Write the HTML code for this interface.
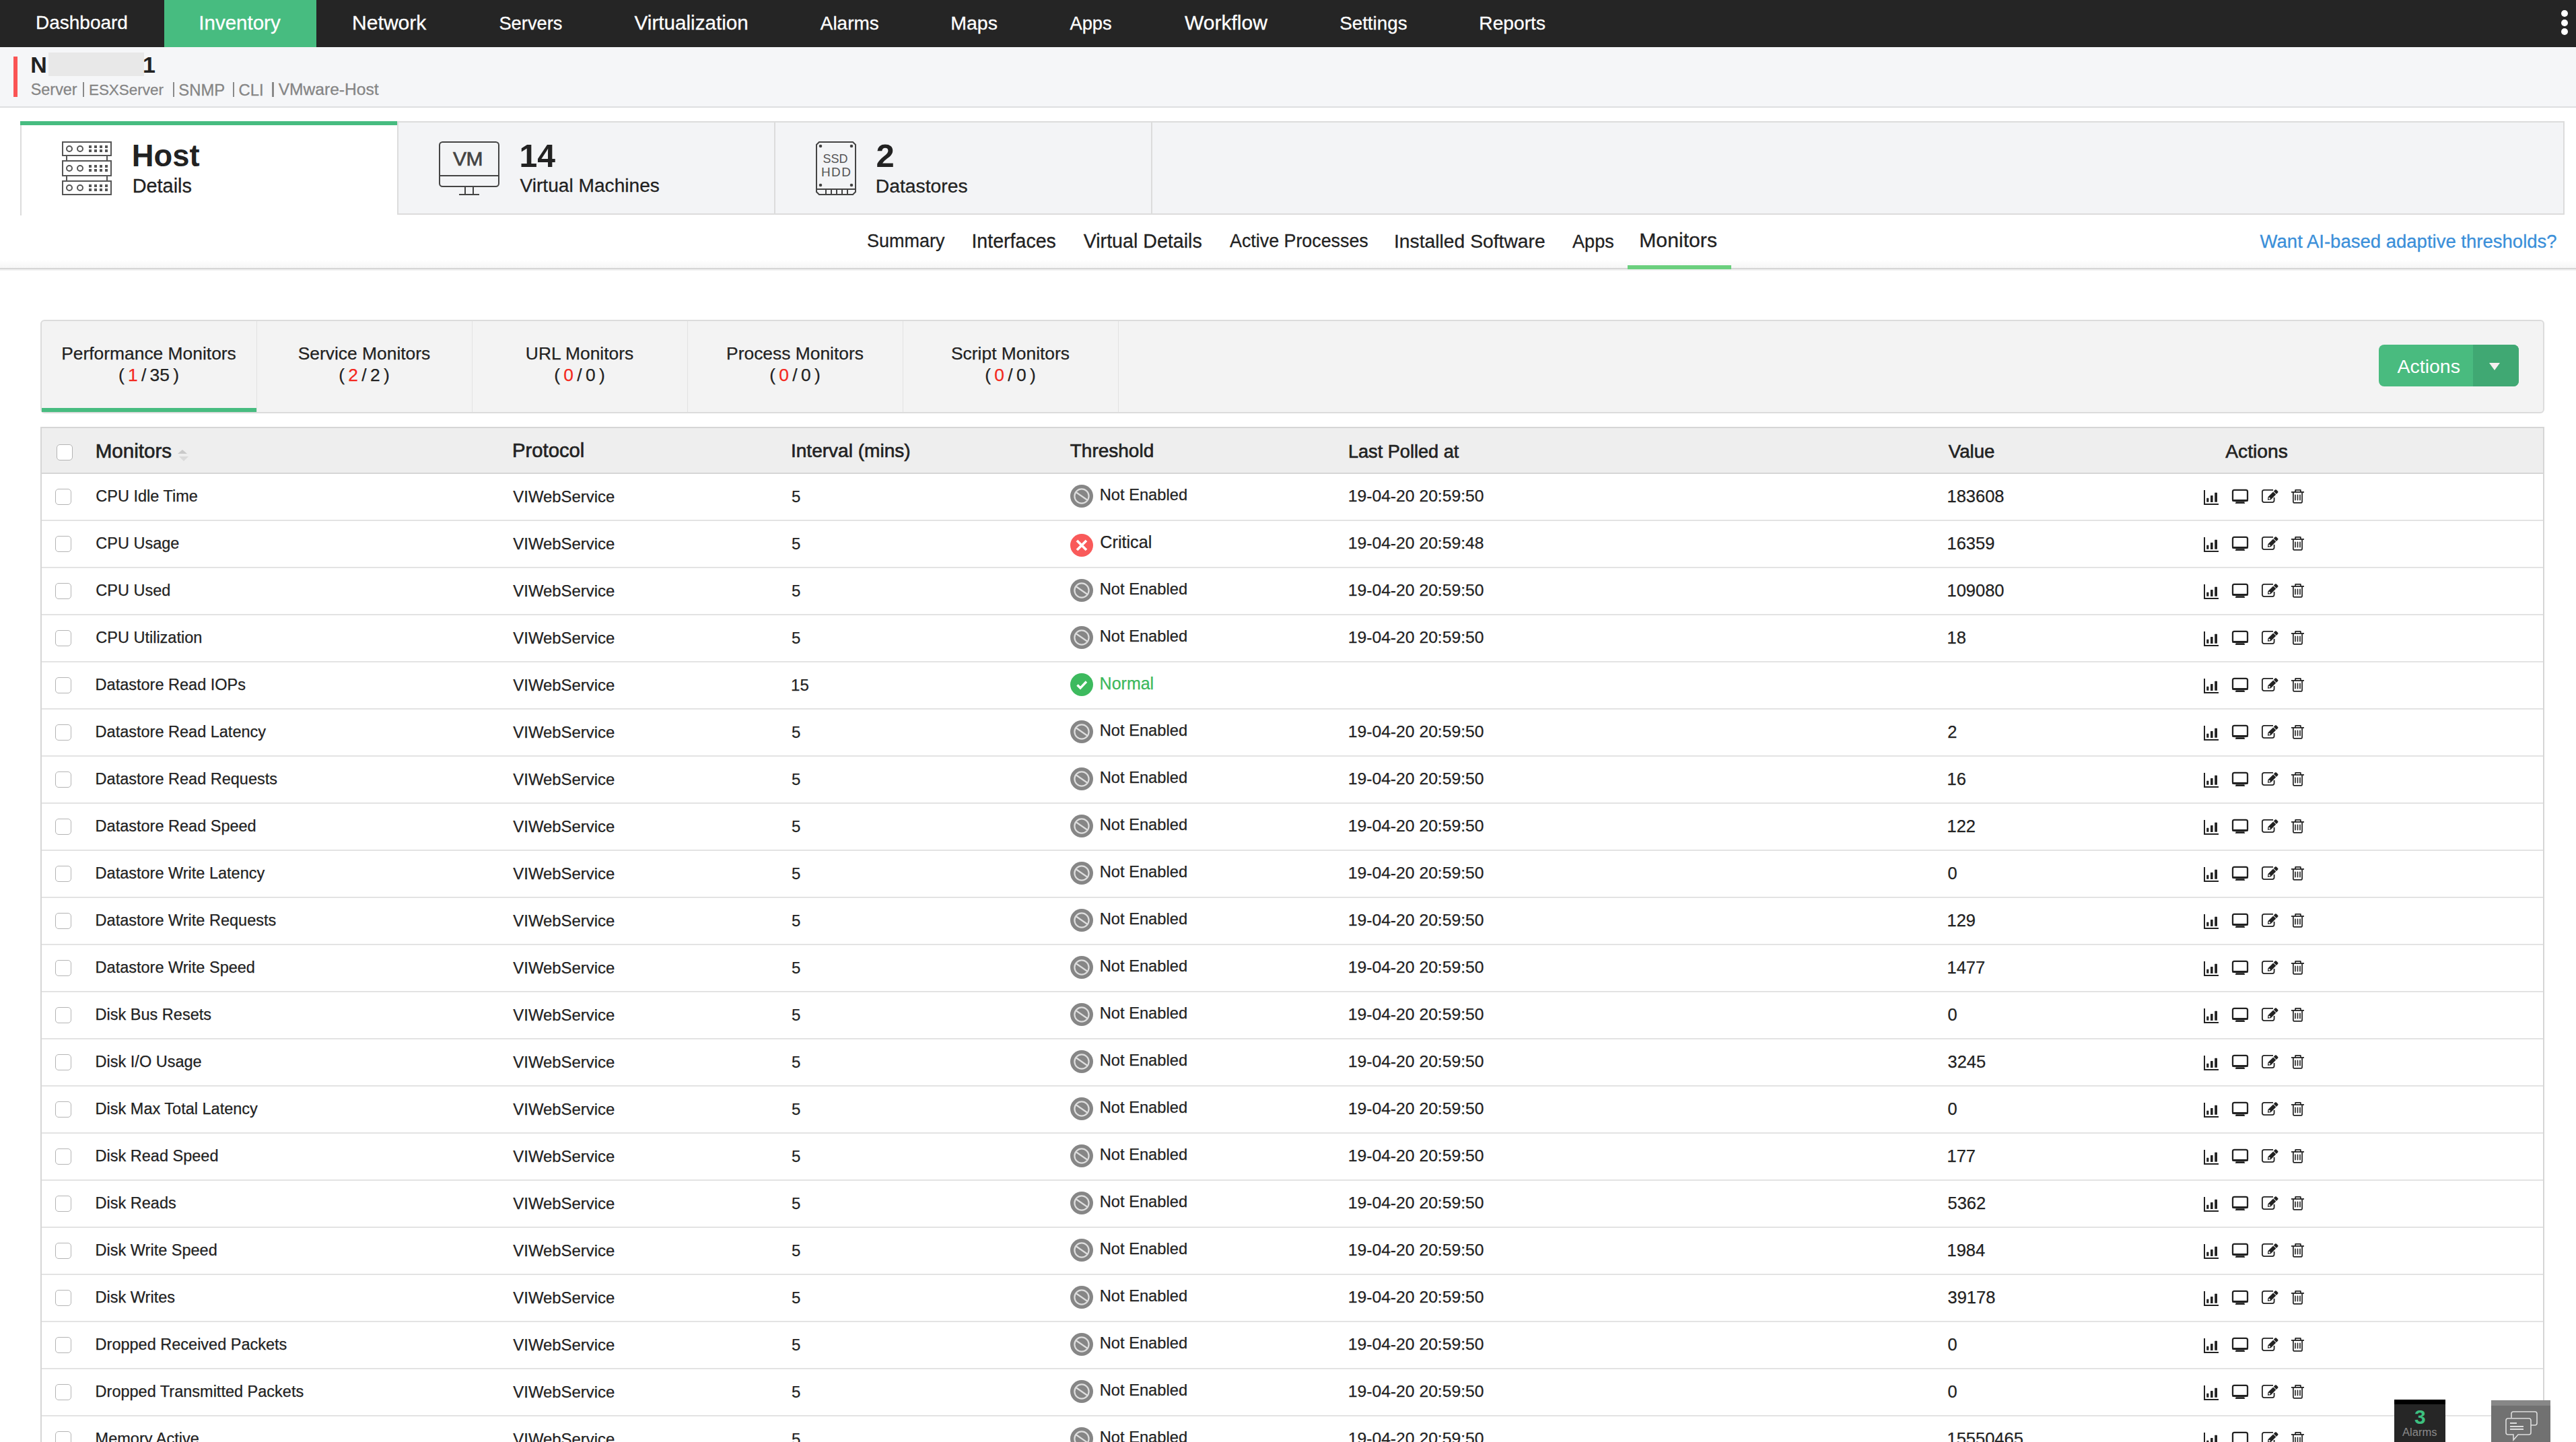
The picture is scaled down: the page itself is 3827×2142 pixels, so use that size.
<!DOCTYPE html>
<html><head><meta charset="utf-8"><title>Monitors</title>
<style>
html,body{margin:0;padding:0;}
body{width:3827px;height:2142px;overflow:hidden;position:relative;background:#fff;font-family:"Liberation Sans",sans-serif;}
.t{position:absolute;white-space:nowrap;line-height:1;}
.c{position:absolute;white-space:nowrap;line-height:1;text-align:center;color:#222;-webkit-text-stroke:0.25px #222;}
.b{position:absolute;}
svg.b{overflow:visible;}
</style></head><body>
<div class="b" style="left:0px;top:0px;width:3827px;height:70px;background:#252525;"></div>
<div class="b" style="left:244px;top:0px;width:226px;height:70px;background:#47bc80;"></div>
<div class="t" style="left:52.96px;top:20.49px;font-size:28.0px;color:#fff;-webkit-text-stroke:0.28px #fff;">Dashboard</div>
<div class="t" style="left:295.35px;top:19.22px;font-size:29.5px;color:#fff;-webkit-text-stroke:0.29px #fff;">Inventory</div>
<div class="t" style="left:523.09px;top:18.73px;font-size:30.08px;color:#fff;-webkit-text-stroke:0.30px #fff;">Network</div>
<div class="t" style="left:741.41px;top:21.09px;font-size:27.3px;color:#fff;-webkit-text-stroke:0.27px #fff;">Servers</div>
<div class="t" style="left:942.60px;top:19.09px;font-size:29.66px;color:#fff;-webkit-text-stroke:0.30px #fff;">Virtualization</div>
<div class="t" style="left:1218.80px;top:20.56px;font-size:27.92px;color:#fff;-webkit-text-stroke:0.28px #fff;">Alarms</div>
<div class="t" style="left:1412.22px;top:20.04px;font-size:28.54px;color:#fff;-webkit-text-stroke:0.29px #fff;">Maps</div>
<div class="t" style="left:1589.50px;top:21.09px;font-size:27.29px;color:#fff;-webkit-text-stroke:0.27px #fff;">Apps</div>
<div class="t" style="left:1760.00px;top:18.80px;font-size:30.0px;color:#fff;-webkit-text-stroke:0.30px #fff;">Workflow</div>
<div class="t" style="left:1990.19px;top:20.69px;font-size:27.77px;color:#fff;-webkit-text-stroke:0.28px #fff;">Settings</div>
<div class="t" style="left:2197.34px;top:20.32px;font-size:28.2px;color:#fff;-webkit-text-stroke:0.28px #fff;">Reports</div>
<div class="b" style="left:3805px;top:15px;width:10px;height:10px;border-radius:50%;background:#fff"></div>
<div class="b" style="left:3805px;top:29px;width:10px;height:10px;border-radius:50%;background:#fff"></div>
<div class="b" style="left:3805px;top:42px;width:10px;height:10px;border-radius:50%;background:#fff"></div>
<div class="b" style="left:0px;top:70px;width:3827px;height:88px;background:#f5f6f8;"></div>
<div class="b" style="left:0px;top:158px;width:3827px;height:2px;background:#dedfe1;"></div>
<div class="b" style="left:20px;top:84px;width:6px;height:60px;background:#fa5454;"></div>
<div class="t" style="left:45.32px;top:79.21px;font-size:34px;color:#222;font-weight:bold;">N</div>
<div class="b" style="left:72px;top:78px;width:142px;height:35px;background:#e8e8e8;"></div>
<div class="t" style="left:211.96px;top:79.21px;font-size:34px;color:#222;font-weight:bold;">1</div>
<div class="t" style="left:45.76px;top:122.20px;font-size:23.39px;color:#858585;-webkit-text-stroke:0.28px #858585;">Server</div>
<div class="t" style="left:131.90px;top:122.97px;font-size:22.47px;color:#858585;-webkit-text-stroke:0.27px #858585;">ESXServer</div>
<div class="t" style="left:265.35px;top:121.83px;font-size:23.82px;color:#858585;-webkit-text-stroke:0.29px #858585;">SNMP</div>
<div class="t" style="left:354.61px;top:121.85px;font-size:23.8px;color:#858585;-webkit-text-stroke:0.29px #858585;">CLI</div>
<div class="t" style="left:413.70px;top:121.18px;font-size:24.59px;color:#858585;-webkit-text-stroke:0.30px #858585;">VMware-Host</div>
<div class="b" style="left:123.0px;top:122px;width:2.4px;height:22px;background:#8a8a8a;"></div>
<div class="b" style="left:256.7px;top:122px;width:2.4px;height:22px;background:#8a8a8a;"></div>
<div class="b" style="left:346.1px;top:122px;width:2.4px;height:22px;background:#8a8a8a;"></div>
<div class="b" style="left:404.3px;top:122px;width:2.4px;height:22px;background:#8a8a8a;"></div>
<div class="b" style="left:30px;top:180px;width:3780px;height:139px;background:#f3f4f6;border:2px solid #dcdcdc;box-sizing:border-box;"></div>
<div class="b" style="left:30px;top:180px;width:560px;height:140px;background:#fff;border-left:2px solid #dcdcdc;box-sizing:border-box;"></div>
<div class="b" style="left:30px;top:180px;width:560px;height:6px;background:#47bc80;"></div>
<div class="b" style="left:590px;top:182px;width:2px;height:137px;background:#dcdcdc;"></div>
<div class="b" style="left:1150px;top:182px;width:2px;height:137px;background:#dcdcdc;"></div>
<div class="b" style="left:1710px;top:182px;width:2px;height:137px;background:#dcdcdc;"></div>
<svg class="b" style="left:90px;top:208px" width="80" height="84" viewBox="90 208 80 84" fill="none" stroke="#555" stroke-width="2">
<rect x="93" y="211" width="72" height="20"/><rect x="93" y="239" width="72" height="22"/><rect x="93" y="269" width="72" height="20"/>
<line x1="99" y1="231" x2="99" y2="239"/><line x1="159" y1="231" x2="159" y2="239"/>
<line x1="99" y1="261" x2="99" y2="269"/><line x1="159" y1="261" x2="159" y2="269"/>
<circle cx="103" cy="221" r="4"/><circle cx="119" cy="221" r="4"/><circle cx="103" cy="250" r="4"/><circle cx="119" cy="250" r="4"/><circle cx="103" cy="279" r="4"/><circle cx="119" cy="279" r="4"/><rect x="132" y="216" width="4" height="4" fill="#555" stroke="none"/><rect x="140" y="216" width="4" height="4" fill="#555" stroke="none"/><rect x="148" y="216" width="4" height="4" fill="#555" stroke="none"/><rect x="156" y="216" width="4" height="4" fill="#555" stroke="none"/><rect x="132" y="222" width="4" height="4" fill="#555" stroke="none"/><rect x="140" y="222" width="4" height="4" fill="#555" stroke="none"/><rect x="148" y="222" width="4" height="4" fill="#555" stroke="none"/><rect x="156" y="222" width="4" height="4" fill="#555" stroke="none"/><rect x="132" y="245" width="4" height="4" fill="#555" stroke="none"/><rect x="140" y="245" width="4" height="4" fill="#555" stroke="none"/><rect x="148" y="245" width="4" height="4" fill="#555" stroke="none"/><rect x="156" y="245" width="4" height="4" fill="#555" stroke="none"/><rect x="132" y="251" width="4" height="4" fill="#555" stroke="none"/><rect x="140" y="251" width="4" height="4" fill="#555" stroke="none"/><rect x="148" y="251" width="4" height="4" fill="#555" stroke="none"/><rect x="156" y="251" width="4" height="4" fill="#555" stroke="none"/><rect x="132" y="274" width="4" height="4" fill="#555" stroke="none"/><rect x="140" y="274" width="4" height="4" fill="#555" stroke="none"/><rect x="148" y="274" width="4" height="4" fill="#555" stroke="none"/><rect x="156" y="274" width="4" height="4" fill="#555" stroke="none"/><rect x="132" y="280" width="4" height="4" fill="#555" stroke="none"/><rect x="140" y="280" width="4" height="4" fill="#555" stroke="none"/><rect x="148" y="280" width="4" height="4" fill="#555" stroke="none"/><rect x="156" y="280" width="4" height="4" fill="#555" stroke="none"/></svg>
<svg class="b" style="left:650px;top:208px" width="94" height="84" viewBox="650 208 94 84" fill="none" stroke="#444" stroke-width="2">
<rect x="653" y="211" width="88" height="66" rx="4.5"/><line x1="653" y1="261" x2="741" y2="261"/>
<line x1="691" y1="277" x2="691" y2="289"/><line x1="703" y1="277" x2="703" y2="289"/><line x1="682" y1="289" x2="712" y2="289"/>
<text x="695" y="245.8" text-anchor="middle" font-family="Liberation Sans" font-size="30" fill="#444" stroke="#444" stroke-width="0.7" letter-spacing="-0.5">VM</text>
</svg>
<svg class="b" style="left:1210px;top:208px" width="64" height="84" viewBox="1210 208 64 84" fill="none" stroke="#444" stroke-width="2">
<path d="M1217 211 H1267 L1271 215 V285 L1267 289 H1217 L1213 285 V215 Z"/>
<line x1="1213" y1="281" x2="1271" y2="281"/>
<line x1="1227" y1="281" x2="1227" y2="289"/><line x1="1235" y1="281" x2="1235" y2="289"/><line x1="1243" y1="281" x2="1243" y2="289"/><line x1="1251" y1="281" x2="1251" y2="289"/><line x1="1259" y1="281" x2="1259" y2="289"/>
<circle cx="1219" cy="217" r="1.3" fill="#444"/><circle cx="1265" cy="217" r="1.3" fill="#444"/><circle cx="1219" cy="275" r="1.3" fill="#444"/><circle cx="1265" cy="275" r="1.3" fill="#444"/>
<text x="1241" y="241.5" text-anchor="middle" font-family="Liberation Sans" font-size="18" fill="#555" stroke="none">SSD</text>
<text x="1242.7" y="261.5" text-anchor="middle" font-family="Liberation Sans" font-size="19" fill="#555" stroke="none" letter-spacing="1.4">HDD</text>
</svg>
<div class="t" style="left:195.83px;top:208.92px;font-size:45.33px;color:#222;font-weight:bold;">Host</div>
<div class="t" style="left:196.69px;top:261.55px;font-size:28.88px;color:#222;-webkit-text-stroke:0.29px #222;">Details</div>
<div class="t" style="left:771.61px;top:206.77px;font-size:48.1px;color:#222;font-weight:bold;">14</div>
<div class="t" style="left:772.50px;top:262.18px;font-size:28.13px;color:#222;-webkit-text-stroke:0.28px #222;">Virtual Machines</div>
<div class="t" style="left:1301.53px;top:206.53px;font-size:48.98px;color:#222;font-weight:bold;">2</div>
<div class="t" style="left:1300.73px;top:262.01px;font-size:28.33px;color:#222;-webkit-text-stroke:0.28px #222;">Datastores</div>
<div class="t" style="left:1287.92px;top:345.11px;font-size:27.03px;color:#222;-webkit-text-stroke:0.27px #222;">Summary</div>
<div class="t" style="left:1443.43px;top:343.81px;font-size:28.57px;color:#222;-webkit-text-stroke:0.29px #222;">Interfaces</div>
<div class="t" style="left:1609.70px;top:343.75px;font-size:28.64px;color:#222;-webkit-text-stroke:0.29px #222;">Virtual Details</div>
<div class="t" style="left:1827.00px;top:345.28px;font-size:26.83px;color:#222;-webkit-text-stroke:0.27px #222;">Active Processes</div>
<div class="t" style="left:2070.95px;top:344.05px;font-size:28.29px;color:#222;-webkit-text-stroke:0.28px #222;">Installed Software</div>
<div class="t" style="left:2336.00px;top:345.05px;font-size:27.11px;color:#222;-webkit-text-stroke:0.27px #222;">Apps</div>
<div class="t" style="left:2435.18px;top:342.41px;font-size:30.22px;color:#222;-webkit-text-stroke:0.30px #222;">Monitors</div>
<div class="b" style="left:0px;top:386px;width:3827px;height:12px;background:linear-gradient(#fff0,#f6f6f6);"></div>
<div class="b" style="left:0px;top:398px;width:3827px;height:2px;background:#d6d6d6;"></div>
<div class="b" style="left:0px;top:400px;width:3827px;height:2px;background:#f0f0f0;"></div>
<div class="b" style="left:2418px;top:394px;width:154px;height:6px;background:#6bcf7e;"></div>
<div class="t" style="left:3357.60px;top:344.70px;font-size:27.52px;color:#3a8fd9;-webkit-text-stroke:0.28px #3a8fd9;">Want AI-based adaptive thresholds?</div>
<div class="b" style="left:60px;top:475px;width:3720px;height:139px;background:#f3f3f3;border:2px solid #dcdcdc;border-radius:6px;box-sizing:border-box;"></div>
<div class="b" style="left:381px;top:477px;width:1px;height:135px;background:#e2e2e2;"></div>
<div class="b" style="left:701px;top:477px;width:1px;height:135px;background:#e2e2e2;"></div>
<div class="b" style="left:1021px;top:477px;width:1px;height:135px;background:#e2e2e2;"></div>
<div class="b" style="left:1341px;top:477px;width:1px;height:135px;background:#e2e2e2;"></div>
<div class="b" style="left:1661px;top:477px;width:1px;height:135px;background:#e2e2e2;"></div>
<div class="b" style="left:62px;top:606px;width:319px;height:6px;background:#47bc80;"></div>
<div class="c" style="left:61px;top:511.65px;width:320px;font-size:26.4px;">Performance Monitors</div>
<div class="c" style="left:61px;top:543.65px;width:320px;font-size:26.4px;">(&thinsp;<span style="color:#f3281e;-webkit-text-stroke:0.25px #f3281e">1</span>&thinsp;/&thinsp;35&thinsp;)</div>
<div class="c" style="left:381px;top:511.65px;width:320px;font-size:26.4px;">Service Monitors</div>
<div class="c" style="left:381px;top:543.65px;width:320px;font-size:26.4px;">(&thinsp;<span style="color:#f3281e;-webkit-text-stroke:0.25px #f3281e">2</span>&thinsp;/&thinsp;2&thinsp;)</div>
<div class="c" style="left:701px;top:511.65px;width:320px;font-size:26.4px;">URL Monitors</div>
<div class="c" style="left:701px;top:543.65px;width:320px;font-size:26.4px;">(&thinsp;<span style="color:#f3281e;-webkit-text-stroke:0.25px #f3281e">0</span>&thinsp;/&thinsp;0&thinsp;)</div>
<div class="c" style="left:1021px;top:511.65px;width:320px;font-size:26.4px;">Process Monitors</div>
<div class="c" style="left:1021px;top:543.65px;width:320px;font-size:26.4px;">(&thinsp;<span style="color:#f3281e;-webkit-text-stroke:0.25px #f3281e">0</span>&thinsp;/&thinsp;0&thinsp;)</div>
<div class="c" style="left:1341px;top:511.65px;width:320px;font-size:26.4px;">Script Monitors</div>
<div class="c" style="left:1341px;top:543.65px;width:320px;font-size:26.4px;">(&thinsp;<span style="color:#f3281e;-webkit-text-stroke:0.25px #f3281e">0</span>&thinsp;/&thinsp;0&thinsp;)</div>
<div class="b" style="left:3534px;top:512px;width:208px;height:62px;background:#49bb7f;border-radius:8px;"></div>
<div class="b" style="left:3674px;top:512px;width:68px;height:62px;background:#40a873;border-radius:0 8px 8px 0;"></div>
<div class="t" style="left:3561.40px;top:529.83px;font-size:28.55px;color:#fff;">Actions</div>
<svg class="b" style="left:3696px;top:537px" width="20" height="16"><path d="M2 2 H18 L10 13 Z" fill="#f4f0f0"/></svg>
<div class="b" style="left:60px;top:634px;width:3720px;height:1600px;background:#fff;border:2px solid #d6d6d6;box-sizing:border-box;"></div>
<div class="b" style="left:60px;top:634px;width:3720px;height:70px;background:#eeeeee;border:2px solid #d6d6d6;box-sizing:border-box;"></div>
<div class="b" style="left:84px;top:660px;width:24px;height:24px;box-sizing:border-box;border:1.5px solid #b4b4b4;border-radius:5px;background:#fff;"></div>
<div class="t" style="left:141.63px;top:654.94px;font-size:29.6px;color:#222;-webkit-text-stroke:0.65px #222;">Monitors</div>
<div class="t" style="left:761.05px;top:655.24px;font-size:29.24px;color:#222;-webkit-text-stroke:0.64px #222;">Protocol</div>
<div class="t" style="left:1174.96px;top:656.24px;font-size:28.06px;color:#222;-webkit-text-stroke:0.62px #222;">Interval (mins)</div>
<div class="t" style="left:1589.72px;top:656.28px;font-size:28.01px;color:#222;-webkit-text-stroke:0.62px #222;">Threshold</div>
<div class="t" style="left:2002.90px;top:657.01px;font-size:27.15px;color:#222;-webkit-text-stroke:0.60px #222;">Last Polled at</div>
<div class="t" style="left:2894.78px;top:656.60px;font-size:27.64px;color:#222;-webkit-text-stroke:0.61px #222;">Value</div>
<div class="t" style="left:3306.28px;top:656.11px;font-size:28.22px;color:#222;-webkit-text-stroke:0.62px #222;">Actions</div>
<svg class="b" style="left:262px;top:666px" width="20" height="22"><path d="M2 8 L9 2 L16 8 Z" fill="#c9c9c9"/><path d="M4 12 L18 12 L11 19 Z" fill="#dadada"/></svg>
<div class="b" style="left:62px;top:772px;width:3716px;height:2px;background:#e3e3e3;"></div>
<div class="b" style="left:82px;top:726px;width:24px;height:24px;box-sizing:border-box;border:1.5px solid #b4b4b4;border-radius:5px;background:#fff;"></div>
<div class="t" style="left:142.32px;top:726.30px;font-size:23.5px;color:#222;-webkit-text-stroke:0.25px #222;">CPU Idle Time</div>
<div class="t" style="left:762.36px;top:725.96px;font-size:23.9px;color:#222;-webkit-text-stroke:0.25px #222;">VIWebService</div>
<div class="t" style="left:1176.04px;top:725.88px;font-size:24px;color:#222;-webkit-text-stroke:0.25px #222;">5</div>
<div class="b" style="left:1590px;top:720px;width:34px;height:34px"><svg width="34" height="34" viewBox="0 0 34 34"><circle cx="17" cy="17" r="17" fill="#868686"/><circle cx="17" cy="17" r="10.6" fill="none" stroke="#dedede" stroke-width="2.2"/><line x1="8.3" y1="11" x2="25.7" y2="23" stroke="#dedede" stroke-width="2.2"/></svg></div>
<div class="t" style="left:1633.70px;top:724.43px;font-size:23.7px;color:#222;-webkit-text-stroke:0.25px #222;">Not Enabled</div>
<div class="t" style="left:2002.72px;top:725.29px;font-size:24.7px;color:#222;-webkit-text-stroke:0.25px #222;">19-04-20 20:59:50</div>
<div class="t" style="left:2892.46px;top:724.61px;font-size:25.5px;color:#222;-webkit-text-stroke:0.25px #222;">183608</div>
<svg class="b" style="left:3270px;top:715px" width="156" height="26" viewBox="3270 715 156 26">
<g fill="#222">
<rect x="3274" y="728" width="2" height="22"/><rect x="3274" y="748" width="22" height="2"/>
<rect x="3278.2" y="739.8" width="3.2" height="6" rx="0.6"/><rect x="3284" y="736" width="3.6" height="10" rx="0.6"/><rect x="3290.2" y="731.8" width="3.8" height="14" rx="0.6"/>
</g>
<path d="M3317 742 V730.3 Q3317 727.8 3319.5 727.8 H3336.5 Q3339 727.8 3339 730.3 V742" fill="none" stroke="#222" stroke-width="2.3"/>
<path d="M3316 742 H3340 V743.6 Q3340 745.1 3337 745.1 Q3335 745.1 3333.5 745.4 H3322.5 Q3321 745.1 3319 745.1 Q3316 745.1 3316 743.6 Z" fill="#222"/>
<path d="M3322 745.4 H3334 L3335.3 748 H3320.7 Z" fill="#222"/>
<path d="M3377 727.8 H3363.8 Q3360.9 727.8 3360.9 730.6 V743.3 Q3360.9 746.1 3363.8 746.1 H3375.8 Q3378.6 746.1 3378.6 743.3 V739" fill="none" stroke="#222" stroke-width="1.8"/>
<g transform="translate(3368.9 742.8) rotate(-45)">
<path d="M0 0 L3.8 -2.9 H14.6 V2.9 H3.8 Z" fill="#222"/>
<path d="M15.5 -2.9 H18.6 Q19.9 -2.9 19.9 -1.6 V1.6 Q19.9 2.9 18.6 2.9 H15.5 Z" fill="#222"/>
<rect x="2.6" y="-1.1" width="2.2" height="2.2" fill="#fff"/>
</g>
<g fill="none" stroke="#222">
<path d="M3404 731 H3423" stroke-width="1.8"/>
<path d="M3409.8 731 L3410.3 727.8 H3417.7 L3418.2 731" stroke-width="1.7"/>
<path d="M3406.9 731 V745.2 Q3406.9 746.9 3409.2 746.9 H3417.8 Q3420.1 746.9 3420.1 745.2 V731" stroke-width="1.7"/>
<path d="M3410 735.3 V742.7 M3413.5 735.3 V742.7 M3417 735.3 V742.7" stroke-width="1.6" stroke-linecap="round"/>
</g>
</svg>
<div class="b" style="left:62px;top:842px;width:3716px;height:2px;background:#e3e3e3;"></div>
<div class="b" style="left:82px;top:796px;width:24px;height:24px;box-sizing:border-box;border:1.5px solid #b4b4b4;border-radius:5px;background:#fff;"></div>
<div class="t" style="left:142.32px;top:796.30px;font-size:23.5px;color:#222;-webkit-text-stroke:0.25px #222;">CPU Usage</div>
<div class="t" style="left:762.36px;top:795.96px;font-size:23.9px;color:#222;-webkit-text-stroke:0.25px #222;">VIWebService</div>
<div class="t" style="left:1176.04px;top:795.88px;font-size:24px;color:#222;-webkit-text-stroke:0.25px #222;">5</div>
<div class="b" style="left:1590px;top:792.5px;width:34px;height:34px"><svg width="34" height="34" viewBox="0 0 34 34"><circle cx="17" cy="17" r="17" fill="#f95a5a"/><path d="M10 10 L24 24 M24 10 L10 24" stroke="#fff" stroke-width="3.8"/></svg></div>
<div class="t" style="left:1634.34px;top:793.16px;font-size:25.2px;color:#222;-webkit-text-stroke:0.25px #222;">Critical</div>
<div class="t" style="left:2002.72px;top:795.29px;font-size:24.7px;color:#222;-webkit-text-stroke:0.25px #222;">19-04-20 20:59:48</div>
<div class="t" style="left:2892.46px;top:794.61px;font-size:25.5px;color:#222;-webkit-text-stroke:0.25px #222;">16359</div>
<svg class="b" style="left:3270px;top:785px" width="156" height="26" viewBox="3270 785 156 26">
<g fill="#222">
<rect x="3274" y="798" width="2" height="22"/><rect x="3274" y="818" width="22" height="2"/>
<rect x="3278.2" y="809.8" width="3.2" height="6" rx="0.6"/><rect x="3284" y="806" width="3.6" height="10" rx="0.6"/><rect x="3290.2" y="801.8" width="3.8" height="14" rx="0.6"/>
</g>
<path d="M3317 812 V800.3 Q3317 797.8 3319.5 797.8 H3336.5 Q3339 797.8 3339 800.3 V812" fill="none" stroke="#222" stroke-width="2.3"/>
<path d="M3316 812 H3340 V813.6 Q3340 815.1 3337 815.1 Q3335 815.1 3333.5 815.4 H3322.5 Q3321 815.1 3319 815.1 Q3316 815.1 3316 813.6 Z" fill="#222"/>
<path d="M3322 815.4 H3334 L3335.3 818 H3320.7 Z" fill="#222"/>
<path d="M3377 797.8 H3363.8 Q3360.9 797.8 3360.9 800.6 V813.3 Q3360.9 816.1 3363.8 816.1 H3375.8 Q3378.6 816.1 3378.6 813.3 V809" fill="none" stroke="#222" stroke-width="1.8"/>
<g transform="translate(3368.9 812.8) rotate(-45)">
<path d="M0 0 L3.8 -2.9 H14.6 V2.9 H3.8 Z" fill="#222"/>
<path d="M15.5 -2.9 H18.6 Q19.9 -2.9 19.9 -1.6 V1.6 Q19.9 2.9 18.6 2.9 H15.5 Z" fill="#222"/>
<rect x="2.6" y="-1.1" width="2.2" height="2.2" fill="#fff"/>
</g>
<g fill="none" stroke="#222">
<path d="M3404 801 H3423" stroke-width="1.8"/>
<path d="M3409.8 801 L3410.3 797.8 H3417.7 L3418.2 801" stroke-width="1.7"/>
<path d="M3406.9 801 V815.2 Q3406.9 816.9 3409.2 816.9 H3417.8 Q3420.1 816.9 3420.1 815.2 V801" stroke-width="1.7"/>
<path d="M3410 805.3 V812.7 M3413.5 805.3 V812.7 M3417 805.3 V812.7" stroke-width="1.6" stroke-linecap="round"/>
</g>
</svg>
<div class="b" style="left:62px;top:912px;width:3716px;height:2px;background:#e3e3e3;"></div>
<div class="b" style="left:82px;top:866px;width:24px;height:24px;box-sizing:border-box;border:1.5px solid #b4b4b4;border-radius:5px;background:#fff;"></div>
<div class="t" style="left:142.32px;top:866.30px;font-size:23.5px;color:#222;-webkit-text-stroke:0.25px #222;">CPU Used</div>
<div class="t" style="left:762.36px;top:865.96px;font-size:23.9px;color:#222;-webkit-text-stroke:0.25px #222;">VIWebService</div>
<div class="t" style="left:1176.04px;top:865.88px;font-size:24px;color:#222;-webkit-text-stroke:0.25px #222;">5</div>
<div class="b" style="left:1590px;top:860px;width:34px;height:34px"><svg width="34" height="34" viewBox="0 0 34 34"><circle cx="17" cy="17" r="17" fill="#868686"/><circle cx="17" cy="17" r="10.6" fill="none" stroke="#dedede" stroke-width="2.2"/><line x1="8.3" y1="11" x2="25.7" y2="23" stroke="#dedede" stroke-width="2.2"/></svg></div>
<div class="t" style="left:1633.70px;top:864.43px;font-size:23.7px;color:#222;-webkit-text-stroke:0.25px #222;">Not Enabled</div>
<div class="t" style="left:2002.72px;top:865.29px;font-size:24.7px;color:#222;-webkit-text-stroke:0.25px #222;">19-04-20 20:59:50</div>
<div class="t" style="left:2892.46px;top:864.61px;font-size:25.5px;color:#222;-webkit-text-stroke:0.25px #222;">109080</div>
<svg class="b" style="left:3270px;top:855px" width="156" height="26" viewBox="3270 855 156 26">
<g fill="#222">
<rect x="3274" y="868" width="2" height="22"/><rect x="3274" y="888" width="22" height="2"/>
<rect x="3278.2" y="879.8" width="3.2" height="6" rx="0.6"/><rect x="3284" y="876" width="3.6" height="10" rx="0.6"/><rect x="3290.2" y="871.8" width="3.8" height="14" rx="0.6"/>
</g>
<path d="M3317 882 V870.3 Q3317 867.8 3319.5 867.8 H3336.5 Q3339 867.8 3339 870.3 V882" fill="none" stroke="#222" stroke-width="2.3"/>
<path d="M3316 882 H3340 V883.6 Q3340 885.1 3337 885.1 Q3335 885.1 3333.5 885.4 H3322.5 Q3321 885.1 3319 885.1 Q3316 885.1 3316 883.6 Z" fill="#222"/>
<path d="M3322 885.4 H3334 L3335.3 888 H3320.7 Z" fill="#222"/>
<path d="M3377 867.8 H3363.8 Q3360.9 867.8 3360.9 870.6 V883.3 Q3360.9 886.1 3363.8 886.1 H3375.8 Q3378.6 886.1 3378.6 883.3 V879" fill="none" stroke="#222" stroke-width="1.8"/>
<g transform="translate(3368.9 882.8) rotate(-45)">
<path d="M0 0 L3.8 -2.9 H14.6 V2.9 H3.8 Z" fill="#222"/>
<path d="M15.5 -2.9 H18.6 Q19.9 -2.9 19.9 -1.6 V1.6 Q19.9 2.9 18.6 2.9 H15.5 Z" fill="#222"/>
<rect x="2.6" y="-1.1" width="2.2" height="2.2" fill="#fff"/>
</g>
<g fill="none" stroke="#222">
<path d="M3404 871 H3423" stroke-width="1.8"/>
<path d="M3409.8 871 L3410.3 867.8 H3417.7 L3418.2 871" stroke-width="1.7"/>
<path d="M3406.9 871 V885.2 Q3406.9 886.9 3409.2 886.9 H3417.8 Q3420.1 886.9 3420.1 885.2 V871" stroke-width="1.7"/>
<path d="M3410 875.3 V882.7 M3413.5 875.3 V882.7 M3417 875.3 V882.7" stroke-width="1.6" stroke-linecap="round"/>
</g>
</svg>
<div class="b" style="left:62px;top:982px;width:3716px;height:2px;background:#e3e3e3;"></div>
<div class="b" style="left:82px;top:936px;width:24px;height:24px;box-sizing:border-box;border:1.5px solid #b4b4b4;border-radius:5px;background:#fff;"></div>
<div class="t" style="left:142.32px;top:936.30px;font-size:23.5px;color:#222;-webkit-text-stroke:0.25px #222;">CPU Utilization</div>
<div class="t" style="left:762.36px;top:935.96px;font-size:23.9px;color:#222;-webkit-text-stroke:0.25px #222;">VIWebService</div>
<div class="t" style="left:1176.04px;top:935.88px;font-size:24px;color:#222;-webkit-text-stroke:0.25px #222;">5</div>
<div class="b" style="left:1590px;top:930px;width:34px;height:34px"><svg width="34" height="34" viewBox="0 0 34 34"><circle cx="17" cy="17" r="17" fill="#868686"/><circle cx="17" cy="17" r="10.6" fill="none" stroke="#dedede" stroke-width="2.2"/><line x1="8.3" y1="11" x2="25.7" y2="23" stroke="#dedede" stroke-width="2.2"/></svg></div>
<div class="t" style="left:1633.70px;top:934.43px;font-size:23.7px;color:#222;-webkit-text-stroke:0.25px #222;">Not Enabled</div>
<div class="t" style="left:2002.72px;top:935.29px;font-size:24.7px;color:#222;-webkit-text-stroke:0.25px #222;">19-04-20 20:59:50</div>
<div class="t" style="left:2892.46px;top:934.61px;font-size:25.5px;color:#222;-webkit-text-stroke:0.25px #222;">18</div>
<svg class="b" style="left:3270px;top:925px" width="156" height="26" viewBox="3270 925 156 26">
<g fill="#222">
<rect x="3274" y="938" width="2" height="22"/><rect x="3274" y="958" width="22" height="2"/>
<rect x="3278.2" y="949.8" width="3.2" height="6" rx="0.6"/><rect x="3284" y="946" width="3.6" height="10" rx="0.6"/><rect x="3290.2" y="941.8" width="3.8" height="14" rx="0.6"/>
</g>
<path d="M3317 952 V940.3 Q3317 937.8 3319.5 937.8 H3336.5 Q3339 937.8 3339 940.3 V952" fill="none" stroke="#222" stroke-width="2.3"/>
<path d="M3316 952 H3340 V953.6 Q3340 955.1 3337 955.1 Q3335 955.1 3333.5 955.4 H3322.5 Q3321 955.1 3319 955.1 Q3316 955.1 3316 953.6 Z" fill="#222"/>
<path d="M3322 955.4 H3334 L3335.3 958 H3320.7 Z" fill="#222"/>
<path d="M3377 937.8 H3363.8 Q3360.9 937.8 3360.9 940.6 V953.3 Q3360.9 956.1 3363.8 956.1 H3375.8 Q3378.6 956.1 3378.6 953.3 V949" fill="none" stroke="#222" stroke-width="1.8"/>
<g transform="translate(3368.9 952.8) rotate(-45)">
<path d="M0 0 L3.8 -2.9 H14.6 V2.9 H3.8 Z" fill="#222"/>
<path d="M15.5 -2.9 H18.6 Q19.9 -2.9 19.9 -1.6 V1.6 Q19.9 2.9 18.6 2.9 H15.5 Z" fill="#222"/>
<rect x="2.6" y="-1.1" width="2.2" height="2.2" fill="#fff"/>
</g>
<g fill="none" stroke="#222">
<path d="M3404 941 H3423" stroke-width="1.8"/>
<path d="M3409.8 941 L3410.3 937.8 H3417.7 L3418.2 941" stroke-width="1.7"/>
<path d="M3406.9 941 V955.2 Q3406.9 956.9 3409.2 956.9 H3417.8 Q3420.1 956.9 3420.1 955.2 V941" stroke-width="1.7"/>
<path d="M3410 945.3 V952.7 M3413.5 945.3 V952.7 M3417 945.3 V952.7" stroke-width="1.6" stroke-linecap="round"/>
</g>
</svg>
<div class="b" style="left:62px;top:1052px;width:3716px;height:2px;background:#e3e3e3;"></div>
<div class="b" style="left:82px;top:1006px;width:24px;height:24px;box-sizing:border-box;border:1.5px solid #b4b4b4;border-radius:5px;background:#fff;"></div>
<div class="t" style="left:141.62px;top:1006.30px;font-size:23.5px;color:#222;-webkit-text-stroke:0.25px #222;">Datastore Read IOPs</div>
<div class="t" style="left:762.36px;top:1005.96px;font-size:23.9px;color:#222;-webkit-text-stroke:0.25px #222;">VIWebService</div>
<div class="t" style="left:1175.08px;top:1005.88px;font-size:24px;color:#222;-webkit-text-stroke:0.25px #222;">15</div>
<div class="b" style="left:1590px;top:1000px;width:34px;height:34px"><svg width="34" height="34" viewBox="0 0 34 34"><circle cx="17" cy="17" r="17" fill="#3dba5e"/><path d="M10.5 17.5 L15 22 L24 12.5" fill="none" stroke="#fff" stroke-width="3.4"/></svg></div>
<div class="t" style="left:1633.60px;top:1003.33px;font-size:25px;color:#3cb85c;-webkit-text-stroke:0.25px #3cb85c;">Normal</div>
<svg class="b" style="left:3270px;top:995px" width="156" height="26" viewBox="3270 995 156 26">
<g fill="#222">
<rect x="3274" y="1008" width="2" height="22"/><rect x="3274" y="1028" width="22" height="2"/>
<rect x="3278.2" y="1019.8" width="3.2" height="6" rx="0.6"/><rect x="3284" y="1016" width="3.6" height="10" rx="0.6"/><rect x="3290.2" y="1011.8" width="3.8" height="14" rx="0.6"/>
</g>
<path d="M3317 1022 V1010.3 Q3317 1007.8 3319.5 1007.8 H3336.5 Q3339 1007.8 3339 1010.3 V1022" fill="none" stroke="#222" stroke-width="2.3"/>
<path d="M3316 1022 H3340 V1023.6 Q3340 1025.1 3337 1025.1 Q3335 1025.1 3333.5 1025.4 H3322.5 Q3321 1025.1 3319 1025.1 Q3316 1025.1 3316 1023.6 Z" fill="#222"/>
<path d="M3322 1025.4 H3334 L3335.3 1028 H3320.7 Z" fill="#222"/>
<path d="M3377 1007.8 H3363.8 Q3360.9 1007.8 3360.9 1010.6 V1023.3 Q3360.9 1026.1 3363.8 1026.1 H3375.8 Q3378.6 1026.1 3378.6 1023.3 V1019" fill="none" stroke="#222" stroke-width="1.8"/>
<g transform="translate(3368.9 1022.8) rotate(-45)">
<path d="M0 0 L3.8 -2.9 H14.6 V2.9 H3.8 Z" fill="#222"/>
<path d="M15.5 -2.9 H18.6 Q19.9 -2.9 19.9 -1.6 V1.6 Q19.9 2.9 18.6 2.9 H15.5 Z" fill="#222"/>
<rect x="2.6" y="-1.1" width="2.2" height="2.2" fill="#fff"/>
</g>
<g fill="none" stroke="#222">
<path d="M3404 1011 H3423" stroke-width="1.8"/>
<path d="M3409.8 1011 L3410.3 1007.8 H3417.7 L3418.2 1011" stroke-width="1.7"/>
<path d="M3406.9 1011 V1025.2 Q3406.9 1026.9 3409.2 1026.9 H3417.8 Q3420.1 1026.9 3420.1 1025.2 V1011" stroke-width="1.7"/>
<path d="M3410 1015.3 V1022.7 M3413.5 1015.3 V1022.7 M3417 1015.3 V1022.7" stroke-width="1.6" stroke-linecap="round"/>
</g>
</svg>
<div class="b" style="left:62px;top:1122px;width:3716px;height:2px;background:#e3e3e3;"></div>
<div class="b" style="left:82px;top:1076px;width:24px;height:24px;box-sizing:border-box;border:1.5px solid #b4b4b4;border-radius:5px;background:#fff;"></div>
<div class="t" style="left:141.62px;top:1076.30px;font-size:23.5px;color:#222;-webkit-text-stroke:0.25px #222;">Datastore Read Latency</div>
<div class="t" style="left:762.36px;top:1075.96px;font-size:23.9px;color:#222;-webkit-text-stroke:0.25px #222;">VIWebService</div>
<div class="t" style="left:1176.04px;top:1075.88px;font-size:24px;color:#222;-webkit-text-stroke:0.25px #222;">5</div>
<div class="b" style="left:1590px;top:1070px;width:34px;height:34px"><svg width="34" height="34" viewBox="0 0 34 34"><circle cx="17" cy="17" r="17" fill="#868686"/><circle cx="17" cy="17" r="10.6" fill="none" stroke="#dedede" stroke-width="2.2"/><line x1="8.3" y1="11" x2="25.7" y2="23" stroke="#dedede" stroke-width="2.2"/></svg></div>
<div class="t" style="left:1633.70px;top:1074.43px;font-size:23.7px;color:#222;-webkit-text-stroke:0.25px #222;">Not Enabled</div>
<div class="t" style="left:2002.72px;top:1075.29px;font-size:24.7px;color:#222;-webkit-text-stroke:0.25px #222;">19-04-20 20:59:50</div>
<div class="t" style="left:2893.22px;top:1074.61px;font-size:25.5px;color:#222;-webkit-text-stroke:0.25px #222;">2</div>
<svg class="b" style="left:3270px;top:1065px" width="156" height="26" viewBox="3270 1065 156 26">
<g fill="#222">
<rect x="3274" y="1078" width="2" height="22"/><rect x="3274" y="1098" width="22" height="2"/>
<rect x="3278.2" y="1089.8" width="3.2" height="6" rx="0.6"/><rect x="3284" y="1086" width="3.6" height="10" rx="0.6"/><rect x="3290.2" y="1081.8" width="3.8" height="14" rx="0.6"/>
</g>
<path d="M3317 1092 V1080.3 Q3317 1077.8 3319.5 1077.8 H3336.5 Q3339 1077.8 3339 1080.3 V1092" fill="none" stroke="#222" stroke-width="2.3"/>
<path d="M3316 1092 H3340 V1093.6 Q3340 1095.1 3337 1095.1 Q3335 1095.1 3333.5 1095.4 H3322.5 Q3321 1095.1 3319 1095.1 Q3316 1095.1 3316 1093.6 Z" fill="#222"/>
<path d="M3322 1095.4 H3334 L3335.3 1098 H3320.7 Z" fill="#222"/>
<path d="M3377 1077.8 H3363.8 Q3360.9 1077.8 3360.9 1080.6 V1093.3 Q3360.9 1096.1 3363.8 1096.1 H3375.8 Q3378.6 1096.1 3378.6 1093.3 V1089" fill="none" stroke="#222" stroke-width="1.8"/>
<g transform="translate(3368.9 1092.8) rotate(-45)">
<path d="M0 0 L3.8 -2.9 H14.6 V2.9 H3.8 Z" fill="#222"/>
<path d="M15.5 -2.9 H18.6 Q19.9 -2.9 19.9 -1.6 V1.6 Q19.9 2.9 18.6 2.9 H15.5 Z" fill="#222"/>
<rect x="2.6" y="-1.1" width="2.2" height="2.2" fill="#fff"/>
</g>
<g fill="none" stroke="#222">
<path d="M3404 1081 H3423" stroke-width="1.8"/>
<path d="M3409.8 1081 L3410.3 1077.8 H3417.7 L3418.2 1081" stroke-width="1.7"/>
<path d="M3406.9 1081 V1095.2 Q3406.9 1096.9 3409.2 1096.9 H3417.8 Q3420.1 1096.9 3420.1 1095.2 V1081" stroke-width="1.7"/>
<path d="M3410 1085.3 V1092.7 M3413.5 1085.3 V1092.7 M3417 1085.3 V1092.7" stroke-width="1.6" stroke-linecap="round"/>
</g>
</svg>
<div class="b" style="left:62px;top:1192px;width:3716px;height:2px;background:#e3e3e3;"></div>
<div class="b" style="left:82px;top:1146px;width:24px;height:24px;box-sizing:border-box;border:1.5px solid #b4b4b4;border-radius:5px;background:#fff;"></div>
<div class="t" style="left:141.62px;top:1146.30px;font-size:23.5px;color:#222;-webkit-text-stroke:0.25px #222;">Datastore Read Requests</div>
<div class="t" style="left:762.36px;top:1145.96px;font-size:23.9px;color:#222;-webkit-text-stroke:0.25px #222;">VIWebService</div>
<div class="t" style="left:1176.04px;top:1145.88px;font-size:24px;color:#222;-webkit-text-stroke:0.25px #222;">5</div>
<div class="b" style="left:1590px;top:1140px;width:34px;height:34px"><svg width="34" height="34" viewBox="0 0 34 34"><circle cx="17" cy="17" r="17" fill="#868686"/><circle cx="17" cy="17" r="10.6" fill="none" stroke="#dedede" stroke-width="2.2"/><line x1="8.3" y1="11" x2="25.7" y2="23" stroke="#dedede" stroke-width="2.2"/></svg></div>
<div class="t" style="left:1633.70px;top:1144.43px;font-size:23.7px;color:#222;-webkit-text-stroke:0.25px #222;">Not Enabled</div>
<div class="t" style="left:2002.72px;top:1145.29px;font-size:24.7px;color:#222;-webkit-text-stroke:0.25px #222;">19-04-20 20:59:50</div>
<div class="t" style="left:2892.46px;top:1144.61px;font-size:25.5px;color:#222;-webkit-text-stroke:0.25px #222;">16</div>
<svg class="b" style="left:3270px;top:1135px" width="156" height="26" viewBox="3270 1135 156 26">
<g fill="#222">
<rect x="3274" y="1148" width="2" height="22"/><rect x="3274" y="1168" width="22" height="2"/>
<rect x="3278.2" y="1159.8" width="3.2" height="6" rx="0.6"/><rect x="3284" y="1156" width="3.6" height="10" rx="0.6"/><rect x="3290.2" y="1151.8" width="3.8" height="14" rx="0.6"/>
</g>
<path d="M3317 1162 V1150.3 Q3317 1147.8 3319.5 1147.8 H3336.5 Q3339 1147.8 3339 1150.3 V1162" fill="none" stroke="#222" stroke-width="2.3"/>
<path d="M3316 1162 H3340 V1163.6 Q3340 1165.1 3337 1165.1 Q3335 1165.1 3333.5 1165.4 H3322.5 Q3321 1165.1 3319 1165.1 Q3316 1165.1 3316 1163.6 Z" fill="#222"/>
<path d="M3322 1165.4 H3334 L3335.3 1168 H3320.7 Z" fill="#222"/>
<path d="M3377 1147.8 H3363.8 Q3360.9 1147.8 3360.9 1150.6 V1163.3 Q3360.9 1166.1 3363.8 1166.1 H3375.8 Q3378.6 1166.1 3378.6 1163.3 V1159" fill="none" stroke="#222" stroke-width="1.8"/>
<g transform="translate(3368.9 1162.8) rotate(-45)">
<path d="M0 0 L3.8 -2.9 H14.6 V2.9 H3.8 Z" fill="#222"/>
<path d="M15.5 -2.9 H18.6 Q19.9 -2.9 19.9 -1.6 V1.6 Q19.9 2.9 18.6 2.9 H15.5 Z" fill="#222"/>
<rect x="2.6" y="-1.1" width="2.2" height="2.2" fill="#fff"/>
</g>
<g fill="none" stroke="#222">
<path d="M3404 1151 H3423" stroke-width="1.8"/>
<path d="M3409.8 1151 L3410.3 1147.8 H3417.7 L3418.2 1151" stroke-width="1.7"/>
<path d="M3406.9 1151 V1165.2 Q3406.9 1166.9 3409.2 1166.9 H3417.8 Q3420.1 1166.9 3420.1 1165.2 V1151" stroke-width="1.7"/>
<path d="M3410 1155.3 V1162.7 M3413.5 1155.3 V1162.7 M3417 1155.3 V1162.7" stroke-width="1.6" stroke-linecap="round"/>
</g>
</svg>
<div class="b" style="left:62px;top:1262px;width:3716px;height:2px;background:#e3e3e3;"></div>
<div class="b" style="left:82px;top:1216px;width:24px;height:24px;box-sizing:border-box;border:1.5px solid #b4b4b4;border-radius:5px;background:#fff;"></div>
<div class="t" style="left:141.62px;top:1216.30px;font-size:23.5px;color:#222;-webkit-text-stroke:0.25px #222;">Datastore Read Speed</div>
<div class="t" style="left:762.36px;top:1215.96px;font-size:23.9px;color:#222;-webkit-text-stroke:0.25px #222;">VIWebService</div>
<div class="t" style="left:1176.04px;top:1215.88px;font-size:24px;color:#222;-webkit-text-stroke:0.25px #222;">5</div>
<div class="b" style="left:1590px;top:1210px;width:34px;height:34px"><svg width="34" height="34" viewBox="0 0 34 34"><circle cx="17" cy="17" r="17" fill="#868686"/><circle cx="17" cy="17" r="10.6" fill="none" stroke="#dedede" stroke-width="2.2"/><line x1="8.3" y1="11" x2="25.7" y2="23" stroke="#dedede" stroke-width="2.2"/></svg></div>
<div class="t" style="left:1633.70px;top:1214.43px;font-size:23.7px;color:#222;-webkit-text-stroke:0.25px #222;">Not Enabled</div>
<div class="t" style="left:2002.72px;top:1215.29px;font-size:24.7px;color:#222;-webkit-text-stroke:0.25px #222;">19-04-20 20:59:50</div>
<div class="t" style="left:2892.46px;top:1214.61px;font-size:25.5px;color:#222;-webkit-text-stroke:0.25px #222;">122</div>
<svg class="b" style="left:3270px;top:1205px" width="156" height="26" viewBox="3270 1205 156 26">
<g fill="#222">
<rect x="3274" y="1218" width="2" height="22"/><rect x="3274" y="1238" width="22" height="2"/>
<rect x="3278.2" y="1229.8" width="3.2" height="6" rx="0.6"/><rect x="3284" y="1226" width="3.6" height="10" rx="0.6"/><rect x="3290.2" y="1221.8" width="3.8" height="14" rx="0.6"/>
</g>
<path d="M3317 1232 V1220.3 Q3317 1217.8 3319.5 1217.8 H3336.5 Q3339 1217.8 3339 1220.3 V1232" fill="none" stroke="#222" stroke-width="2.3"/>
<path d="M3316 1232 H3340 V1233.6 Q3340 1235.1 3337 1235.1 Q3335 1235.1 3333.5 1235.4 H3322.5 Q3321 1235.1 3319 1235.1 Q3316 1235.1 3316 1233.6 Z" fill="#222"/>
<path d="M3322 1235.4 H3334 L3335.3 1238 H3320.7 Z" fill="#222"/>
<path d="M3377 1217.8 H3363.8 Q3360.9 1217.8 3360.9 1220.6 V1233.3 Q3360.9 1236.1 3363.8 1236.1 H3375.8 Q3378.6 1236.1 3378.6 1233.3 V1229" fill="none" stroke="#222" stroke-width="1.8"/>
<g transform="translate(3368.9 1232.8) rotate(-45)">
<path d="M0 0 L3.8 -2.9 H14.6 V2.9 H3.8 Z" fill="#222"/>
<path d="M15.5 -2.9 H18.6 Q19.9 -2.9 19.9 -1.6 V1.6 Q19.9 2.9 18.6 2.9 H15.5 Z" fill="#222"/>
<rect x="2.6" y="-1.1" width="2.2" height="2.2" fill="#fff"/>
</g>
<g fill="none" stroke="#222">
<path d="M3404 1221 H3423" stroke-width="1.8"/>
<path d="M3409.8 1221 L3410.3 1217.8 H3417.7 L3418.2 1221" stroke-width="1.7"/>
<path d="M3406.9 1221 V1235.2 Q3406.9 1236.9 3409.2 1236.9 H3417.8 Q3420.1 1236.9 3420.1 1235.2 V1221" stroke-width="1.7"/>
<path d="M3410 1225.3 V1232.7 M3413.5 1225.3 V1232.7 M3417 1225.3 V1232.7" stroke-width="1.6" stroke-linecap="round"/>
</g>
</svg>
<div class="b" style="left:62px;top:1332px;width:3716px;height:2px;background:#e3e3e3;"></div>
<div class="b" style="left:82px;top:1286px;width:24px;height:24px;box-sizing:border-box;border:1.5px solid #b4b4b4;border-radius:5px;background:#fff;"></div>
<div class="t" style="left:141.62px;top:1286.30px;font-size:23.5px;color:#222;-webkit-text-stroke:0.25px #222;">Datastore Write Latency</div>
<div class="t" style="left:762.36px;top:1285.96px;font-size:23.9px;color:#222;-webkit-text-stroke:0.25px #222;">VIWebService</div>
<div class="t" style="left:1176.04px;top:1285.88px;font-size:24px;color:#222;-webkit-text-stroke:0.25px #222;">5</div>
<div class="b" style="left:1590px;top:1280px;width:34px;height:34px"><svg width="34" height="34" viewBox="0 0 34 34"><circle cx="17" cy="17" r="17" fill="#868686"/><circle cx="17" cy="17" r="10.6" fill="none" stroke="#dedede" stroke-width="2.2"/><line x1="8.3" y1="11" x2="25.7" y2="23" stroke="#dedede" stroke-width="2.2"/></svg></div>
<div class="t" style="left:1633.70px;top:1284.43px;font-size:23.7px;color:#222;-webkit-text-stroke:0.25px #222;">Not Enabled</div>
<div class="t" style="left:2002.72px;top:1285.29px;font-size:24.7px;color:#222;-webkit-text-stroke:0.25px #222;">19-04-20 20:59:50</div>
<div class="t" style="left:2893.48px;top:1284.61px;font-size:25.5px;color:#222;-webkit-text-stroke:0.25px #222;">0</div>
<svg class="b" style="left:3270px;top:1275px" width="156" height="26" viewBox="3270 1275 156 26">
<g fill="#222">
<rect x="3274" y="1288" width="2" height="22"/><rect x="3274" y="1308" width="22" height="2"/>
<rect x="3278.2" y="1299.8" width="3.2" height="6" rx="0.6"/><rect x="3284" y="1296" width="3.6" height="10" rx="0.6"/><rect x="3290.2" y="1291.8" width="3.8" height="14" rx="0.6"/>
</g>
<path d="M3317 1302 V1290.3 Q3317 1287.8 3319.5 1287.8 H3336.5 Q3339 1287.8 3339 1290.3 V1302" fill="none" stroke="#222" stroke-width="2.3"/>
<path d="M3316 1302 H3340 V1303.6 Q3340 1305.1 3337 1305.1 Q3335 1305.1 3333.5 1305.4 H3322.5 Q3321 1305.1 3319 1305.1 Q3316 1305.1 3316 1303.6 Z" fill="#222"/>
<path d="M3322 1305.4 H3334 L3335.3 1308 H3320.7 Z" fill="#222"/>
<path d="M3377 1287.8 H3363.8 Q3360.9 1287.8 3360.9 1290.6 V1303.3 Q3360.9 1306.1 3363.8 1306.1 H3375.8 Q3378.6 1306.1 3378.6 1303.3 V1299" fill="none" stroke="#222" stroke-width="1.8"/>
<g transform="translate(3368.9 1302.8) rotate(-45)">
<path d="M0 0 L3.8 -2.9 H14.6 V2.9 H3.8 Z" fill="#222"/>
<path d="M15.5 -2.9 H18.6 Q19.9 -2.9 19.9 -1.6 V1.6 Q19.9 2.9 18.6 2.9 H15.5 Z" fill="#222"/>
<rect x="2.6" y="-1.1" width="2.2" height="2.2" fill="#fff"/>
</g>
<g fill="none" stroke="#222">
<path d="M3404 1291 H3423" stroke-width="1.8"/>
<path d="M3409.8 1291 L3410.3 1287.8 H3417.7 L3418.2 1291" stroke-width="1.7"/>
<path d="M3406.9 1291 V1305.2 Q3406.9 1306.9 3409.2 1306.9 H3417.8 Q3420.1 1306.9 3420.1 1305.2 V1291" stroke-width="1.7"/>
<path d="M3410 1295.3 V1302.7 M3413.5 1295.3 V1302.7 M3417 1295.3 V1302.7" stroke-width="1.6" stroke-linecap="round"/>
</g>
</svg>
<div class="b" style="left:62px;top:1402px;width:3716px;height:2px;background:#e3e3e3;"></div>
<div class="b" style="left:82px;top:1356px;width:24px;height:24px;box-sizing:border-box;border:1.5px solid #b4b4b4;border-radius:5px;background:#fff;"></div>
<div class="t" style="left:141.62px;top:1356.30px;font-size:23.5px;color:#222;-webkit-text-stroke:0.25px #222;">Datastore Write Requests</div>
<div class="t" style="left:762.36px;top:1355.96px;font-size:23.9px;color:#222;-webkit-text-stroke:0.25px #222;">VIWebService</div>
<div class="t" style="left:1176.04px;top:1355.88px;font-size:24px;color:#222;-webkit-text-stroke:0.25px #222;">5</div>
<div class="b" style="left:1590px;top:1350px;width:34px;height:34px"><svg width="34" height="34" viewBox="0 0 34 34"><circle cx="17" cy="17" r="17" fill="#868686"/><circle cx="17" cy="17" r="10.6" fill="none" stroke="#dedede" stroke-width="2.2"/><line x1="8.3" y1="11" x2="25.7" y2="23" stroke="#dedede" stroke-width="2.2"/></svg></div>
<div class="t" style="left:1633.70px;top:1354.43px;font-size:23.7px;color:#222;-webkit-text-stroke:0.25px #222;">Not Enabled</div>
<div class="t" style="left:2002.72px;top:1355.29px;font-size:24.7px;color:#222;-webkit-text-stroke:0.25px #222;">19-04-20 20:59:50</div>
<div class="t" style="left:2892.46px;top:1354.61px;font-size:25.5px;color:#222;-webkit-text-stroke:0.25px #222;">129</div>
<svg class="b" style="left:3270px;top:1345px" width="156" height="26" viewBox="3270 1345 156 26">
<g fill="#222">
<rect x="3274" y="1358" width="2" height="22"/><rect x="3274" y="1378" width="22" height="2"/>
<rect x="3278.2" y="1369.8" width="3.2" height="6" rx="0.6"/><rect x="3284" y="1366" width="3.6" height="10" rx="0.6"/><rect x="3290.2" y="1361.8" width="3.8" height="14" rx="0.6"/>
</g>
<path d="M3317 1372 V1360.3 Q3317 1357.8 3319.5 1357.8 H3336.5 Q3339 1357.8 3339 1360.3 V1372" fill="none" stroke="#222" stroke-width="2.3"/>
<path d="M3316 1372 H3340 V1373.6 Q3340 1375.1 3337 1375.1 Q3335 1375.1 3333.5 1375.4 H3322.5 Q3321 1375.1 3319 1375.1 Q3316 1375.1 3316 1373.6 Z" fill="#222"/>
<path d="M3322 1375.4 H3334 L3335.3 1378 H3320.7 Z" fill="#222"/>
<path d="M3377 1357.8 H3363.8 Q3360.9 1357.8 3360.9 1360.6 V1373.3 Q3360.9 1376.1 3363.8 1376.1 H3375.8 Q3378.6 1376.1 3378.6 1373.3 V1369" fill="none" stroke="#222" stroke-width="1.8"/>
<g transform="translate(3368.9 1372.8) rotate(-45)">
<path d="M0 0 L3.8 -2.9 H14.6 V2.9 H3.8 Z" fill="#222"/>
<path d="M15.5 -2.9 H18.6 Q19.9 -2.9 19.9 -1.6 V1.6 Q19.9 2.9 18.6 2.9 H15.5 Z" fill="#222"/>
<rect x="2.6" y="-1.1" width="2.2" height="2.2" fill="#fff"/>
</g>
<g fill="none" stroke="#222">
<path d="M3404 1361 H3423" stroke-width="1.8"/>
<path d="M3409.8 1361 L3410.3 1357.8 H3417.7 L3418.2 1361" stroke-width="1.7"/>
<path d="M3406.9 1361 V1375.2 Q3406.9 1376.9 3409.2 1376.9 H3417.8 Q3420.1 1376.9 3420.1 1375.2 V1361" stroke-width="1.7"/>
<path d="M3410 1365.3 V1372.7 M3413.5 1365.3 V1372.7 M3417 1365.3 V1372.7" stroke-width="1.6" stroke-linecap="round"/>
</g>
</svg>
<div class="b" style="left:62px;top:1472px;width:3716px;height:2px;background:#e3e3e3;"></div>
<div class="b" style="left:82px;top:1426px;width:24px;height:24px;box-sizing:border-box;border:1.5px solid #b4b4b4;border-radius:5px;background:#fff;"></div>
<div class="t" style="left:141.62px;top:1426.30px;font-size:23.5px;color:#222;-webkit-text-stroke:0.25px #222;">Datastore Write Speed</div>
<div class="t" style="left:762.36px;top:1425.96px;font-size:23.9px;color:#222;-webkit-text-stroke:0.25px #222;">VIWebService</div>
<div class="t" style="left:1176.04px;top:1425.88px;font-size:24px;color:#222;-webkit-text-stroke:0.25px #222;">5</div>
<div class="b" style="left:1590px;top:1420px;width:34px;height:34px"><svg width="34" height="34" viewBox="0 0 34 34"><circle cx="17" cy="17" r="17" fill="#868686"/><circle cx="17" cy="17" r="10.6" fill="none" stroke="#dedede" stroke-width="2.2"/><line x1="8.3" y1="11" x2="25.7" y2="23" stroke="#dedede" stroke-width="2.2"/></svg></div>
<div class="t" style="left:1633.70px;top:1424.43px;font-size:23.7px;color:#222;-webkit-text-stroke:0.25px #222;">Not Enabled</div>
<div class="t" style="left:2002.72px;top:1425.29px;font-size:24.7px;color:#222;-webkit-text-stroke:0.25px #222;">19-04-20 20:59:50</div>
<div class="t" style="left:2892.46px;top:1424.61px;font-size:25.5px;color:#222;-webkit-text-stroke:0.25px #222;">1477</div>
<svg class="b" style="left:3270px;top:1415px" width="156" height="26" viewBox="3270 1415 156 26">
<g fill="#222">
<rect x="3274" y="1428" width="2" height="22"/><rect x="3274" y="1448" width="22" height="2"/>
<rect x="3278.2" y="1439.8" width="3.2" height="6" rx="0.6"/><rect x="3284" y="1436" width="3.6" height="10" rx="0.6"/><rect x="3290.2" y="1431.8" width="3.8" height="14" rx="0.6"/>
</g>
<path d="M3317 1442 V1430.3 Q3317 1427.8 3319.5 1427.8 H3336.5 Q3339 1427.8 3339 1430.3 V1442" fill="none" stroke="#222" stroke-width="2.3"/>
<path d="M3316 1442 H3340 V1443.6 Q3340 1445.1 3337 1445.1 Q3335 1445.1 3333.5 1445.4 H3322.5 Q3321 1445.1 3319 1445.1 Q3316 1445.1 3316 1443.6 Z" fill="#222"/>
<path d="M3322 1445.4 H3334 L3335.3 1448 H3320.7 Z" fill="#222"/>
<path d="M3377 1427.8 H3363.8 Q3360.9 1427.8 3360.9 1430.6 V1443.3 Q3360.9 1446.1 3363.8 1446.1 H3375.8 Q3378.6 1446.1 3378.6 1443.3 V1439" fill="none" stroke="#222" stroke-width="1.8"/>
<g transform="translate(3368.9 1442.8) rotate(-45)">
<path d="M0 0 L3.8 -2.9 H14.6 V2.9 H3.8 Z" fill="#222"/>
<path d="M15.5 -2.9 H18.6 Q19.9 -2.9 19.9 -1.6 V1.6 Q19.9 2.9 18.6 2.9 H15.5 Z" fill="#222"/>
<rect x="2.6" y="-1.1" width="2.2" height="2.2" fill="#fff"/>
</g>
<g fill="none" stroke="#222">
<path d="M3404 1431 H3423" stroke-width="1.8"/>
<path d="M3409.8 1431 L3410.3 1427.8 H3417.7 L3418.2 1431" stroke-width="1.7"/>
<path d="M3406.9 1431 V1445.2 Q3406.9 1446.9 3409.2 1446.9 H3417.8 Q3420.1 1446.9 3420.1 1445.2 V1431" stroke-width="1.7"/>
<path d="M3410 1435.3 V1442.7 M3413.5 1435.3 V1442.7 M3417 1435.3 V1442.7" stroke-width="1.6" stroke-linecap="round"/>
</g>
</svg>
<div class="b" style="left:62px;top:1542px;width:3716px;height:2px;background:#e3e3e3;"></div>
<div class="b" style="left:82px;top:1496px;width:24px;height:24px;box-sizing:border-box;border:1.5px solid #b4b4b4;border-radius:5px;background:#fff;"></div>
<div class="t" style="left:141.62px;top:1496.30px;font-size:23.5px;color:#222;-webkit-text-stroke:0.25px #222;">Disk Bus Resets</div>
<div class="t" style="left:762.36px;top:1495.96px;font-size:23.9px;color:#222;-webkit-text-stroke:0.25px #222;">VIWebService</div>
<div class="t" style="left:1176.04px;top:1495.88px;font-size:24px;color:#222;-webkit-text-stroke:0.25px #222;">5</div>
<div class="b" style="left:1590px;top:1490px;width:34px;height:34px"><svg width="34" height="34" viewBox="0 0 34 34"><circle cx="17" cy="17" r="17" fill="#868686"/><circle cx="17" cy="17" r="10.6" fill="none" stroke="#dedede" stroke-width="2.2"/><line x1="8.3" y1="11" x2="25.7" y2="23" stroke="#dedede" stroke-width="2.2"/></svg></div>
<div class="t" style="left:1633.70px;top:1494.43px;font-size:23.7px;color:#222;-webkit-text-stroke:0.25px #222;">Not Enabled</div>
<div class="t" style="left:2002.72px;top:1495.29px;font-size:24.7px;color:#222;-webkit-text-stroke:0.25px #222;">19-04-20 20:59:50</div>
<div class="t" style="left:2893.48px;top:1494.61px;font-size:25.5px;color:#222;-webkit-text-stroke:0.25px #222;">0</div>
<svg class="b" style="left:3270px;top:1485px" width="156" height="26" viewBox="3270 1485 156 26">
<g fill="#222">
<rect x="3274" y="1498" width="2" height="22"/><rect x="3274" y="1518" width="22" height="2"/>
<rect x="3278.2" y="1509.8" width="3.2" height="6" rx="0.6"/><rect x="3284" y="1506" width="3.6" height="10" rx="0.6"/><rect x="3290.2" y="1501.8" width="3.8" height="14" rx="0.6"/>
</g>
<path d="M3317 1512 V1500.3 Q3317 1497.8 3319.5 1497.8 H3336.5 Q3339 1497.8 3339 1500.3 V1512" fill="none" stroke="#222" stroke-width="2.3"/>
<path d="M3316 1512 H3340 V1513.6 Q3340 1515.1 3337 1515.1 Q3335 1515.1 3333.5 1515.4 H3322.5 Q3321 1515.1 3319 1515.1 Q3316 1515.1 3316 1513.6 Z" fill="#222"/>
<path d="M3322 1515.4 H3334 L3335.3 1518 H3320.7 Z" fill="#222"/>
<path d="M3377 1497.8 H3363.8 Q3360.9 1497.8 3360.9 1500.6 V1513.3 Q3360.9 1516.1 3363.8 1516.1 H3375.8 Q3378.6 1516.1 3378.6 1513.3 V1509" fill="none" stroke="#222" stroke-width="1.8"/>
<g transform="translate(3368.9 1512.8) rotate(-45)">
<path d="M0 0 L3.8 -2.9 H14.6 V2.9 H3.8 Z" fill="#222"/>
<path d="M15.5 -2.9 H18.6 Q19.9 -2.9 19.9 -1.6 V1.6 Q19.9 2.9 18.6 2.9 H15.5 Z" fill="#222"/>
<rect x="2.6" y="-1.1" width="2.2" height="2.2" fill="#fff"/>
</g>
<g fill="none" stroke="#222">
<path d="M3404 1501 H3423" stroke-width="1.8"/>
<path d="M3409.8 1501 L3410.3 1497.8 H3417.7 L3418.2 1501" stroke-width="1.7"/>
<path d="M3406.9 1501 V1515.2 Q3406.9 1516.9 3409.2 1516.9 H3417.8 Q3420.1 1516.9 3420.1 1515.2 V1501" stroke-width="1.7"/>
<path d="M3410 1505.3 V1512.7 M3413.5 1505.3 V1512.7 M3417 1505.3 V1512.7" stroke-width="1.6" stroke-linecap="round"/>
</g>
</svg>
<div class="b" style="left:62px;top:1612px;width:3716px;height:2px;background:#e3e3e3;"></div>
<div class="b" style="left:82px;top:1566px;width:24px;height:24px;box-sizing:border-box;border:1.5px solid #b4b4b4;border-radius:5px;background:#fff;"></div>
<div class="t" style="left:141.62px;top:1566.30px;font-size:23.5px;color:#222;-webkit-text-stroke:0.25px #222;">Disk I/O Usage</div>
<div class="t" style="left:762.36px;top:1565.96px;font-size:23.9px;color:#222;-webkit-text-stroke:0.25px #222;">VIWebService</div>
<div class="t" style="left:1176.04px;top:1565.88px;font-size:24px;color:#222;-webkit-text-stroke:0.25px #222;">5</div>
<div class="b" style="left:1590px;top:1560px;width:34px;height:34px"><svg width="34" height="34" viewBox="0 0 34 34"><circle cx="17" cy="17" r="17" fill="#868686"/><circle cx="17" cy="17" r="10.6" fill="none" stroke="#dedede" stroke-width="2.2"/><line x1="8.3" y1="11" x2="25.7" y2="23" stroke="#dedede" stroke-width="2.2"/></svg></div>
<div class="t" style="left:1633.70px;top:1564.43px;font-size:23.7px;color:#222;-webkit-text-stroke:0.25px #222;">Not Enabled</div>
<div class="t" style="left:2002.72px;top:1565.29px;font-size:24.7px;color:#222;-webkit-text-stroke:0.25px #222;">19-04-20 20:59:50</div>
<div class="t" style="left:2893.48px;top:1564.61px;font-size:25.5px;color:#222;-webkit-text-stroke:0.25px #222;">3245</div>
<svg class="b" style="left:3270px;top:1555px" width="156" height="26" viewBox="3270 1555 156 26">
<g fill="#222">
<rect x="3274" y="1568" width="2" height="22"/><rect x="3274" y="1588" width="22" height="2"/>
<rect x="3278.2" y="1579.8" width="3.2" height="6" rx="0.6"/><rect x="3284" y="1576" width="3.6" height="10" rx="0.6"/><rect x="3290.2" y="1571.8" width="3.8" height="14" rx="0.6"/>
</g>
<path d="M3317 1582 V1570.3 Q3317 1567.8 3319.5 1567.8 H3336.5 Q3339 1567.8 3339 1570.3 V1582" fill="none" stroke="#222" stroke-width="2.3"/>
<path d="M3316 1582 H3340 V1583.6 Q3340 1585.1 3337 1585.1 Q3335 1585.1 3333.5 1585.4 H3322.5 Q3321 1585.1 3319 1585.1 Q3316 1585.1 3316 1583.6 Z" fill="#222"/>
<path d="M3322 1585.4 H3334 L3335.3 1588 H3320.7 Z" fill="#222"/>
<path d="M3377 1567.8 H3363.8 Q3360.9 1567.8 3360.9 1570.6 V1583.3 Q3360.9 1586.1 3363.8 1586.1 H3375.8 Q3378.6 1586.1 3378.6 1583.3 V1579" fill="none" stroke="#222" stroke-width="1.8"/>
<g transform="translate(3368.9 1582.8) rotate(-45)">
<path d="M0 0 L3.8 -2.9 H14.6 V2.9 H3.8 Z" fill="#222"/>
<path d="M15.5 -2.9 H18.6 Q19.9 -2.9 19.9 -1.6 V1.6 Q19.9 2.9 18.6 2.9 H15.5 Z" fill="#222"/>
<rect x="2.6" y="-1.1" width="2.2" height="2.2" fill="#fff"/>
</g>
<g fill="none" stroke="#222">
<path d="M3404 1571 H3423" stroke-width="1.8"/>
<path d="M3409.8 1571 L3410.3 1567.8 H3417.7 L3418.2 1571" stroke-width="1.7"/>
<path d="M3406.9 1571 V1585.2 Q3406.9 1586.9 3409.2 1586.9 H3417.8 Q3420.1 1586.9 3420.1 1585.2 V1571" stroke-width="1.7"/>
<path d="M3410 1575.3 V1582.7 M3413.5 1575.3 V1582.7 M3417 1575.3 V1582.7" stroke-width="1.6" stroke-linecap="round"/>
</g>
</svg>
<div class="b" style="left:62px;top:1682px;width:3716px;height:2px;background:#e3e3e3;"></div>
<div class="b" style="left:82px;top:1636px;width:24px;height:24px;box-sizing:border-box;border:1.5px solid #b4b4b4;border-radius:5px;background:#fff;"></div>
<div class="t" style="left:141.62px;top:1636.30px;font-size:23.5px;color:#222;-webkit-text-stroke:0.25px #222;">Disk Max Total Latency</div>
<div class="t" style="left:762.36px;top:1635.96px;font-size:23.9px;color:#222;-webkit-text-stroke:0.25px #222;">VIWebService</div>
<div class="t" style="left:1176.04px;top:1635.88px;font-size:24px;color:#222;-webkit-text-stroke:0.25px #222;">5</div>
<div class="b" style="left:1590px;top:1630px;width:34px;height:34px"><svg width="34" height="34" viewBox="0 0 34 34"><circle cx="17" cy="17" r="17" fill="#868686"/><circle cx="17" cy="17" r="10.6" fill="none" stroke="#dedede" stroke-width="2.2"/><line x1="8.3" y1="11" x2="25.7" y2="23" stroke="#dedede" stroke-width="2.2"/></svg></div>
<div class="t" style="left:1633.70px;top:1634.43px;font-size:23.7px;color:#222;-webkit-text-stroke:0.25px #222;">Not Enabled</div>
<div class="t" style="left:2002.72px;top:1635.29px;font-size:24.7px;color:#222;-webkit-text-stroke:0.25px #222;">19-04-20 20:59:50</div>
<div class="t" style="left:2893.48px;top:1634.61px;font-size:25.5px;color:#222;-webkit-text-stroke:0.25px #222;">0</div>
<svg class="b" style="left:3270px;top:1625px" width="156" height="26" viewBox="3270 1625 156 26">
<g fill="#222">
<rect x="3274" y="1638" width="2" height="22"/><rect x="3274" y="1658" width="22" height="2"/>
<rect x="3278.2" y="1649.8" width="3.2" height="6" rx="0.6"/><rect x="3284" y="1646" width="3.6" height="10" rx="0.6"/><rect x="3290.2" y="1641.8" width="3.8" height="14" rx="0.6"/>
</g>
<path d="M3317 1652 V1640.3 Q3317 1637.8 3319.5 1637.8 H3336.5 Q3339 1637.8 3339 1640.3 V1652" fill="none" stroke="#222" stroke-width="2.3"/>
<path d="M3316 1652 H3340 V1653.6 Q3340 1655.1 3337 1655.1 Q3335 1655.1 3333.5 1655.4 H3322.5 Q3321 1655.1 3319 1655.1 Q3316 1655.1 3316 1653.6 Z" fill="#222"/>
<path d="M3322 1655.4 H3334 L3335.3 1658 H3320.7 Z" fill="#222"/>
<path d="M3377 1637.8 H3363.8 Q3360.9 1637.8 3360.9 1640.6 V1653.3 Q3360.9 1656.1 3363.8 1656.1 H3375.8 Q3378.6 1656.1 3378.6 1653.3 V1649" fill="none" stroke="#222" stroke-width="1.8"/>
<g transform="translate(3368.9 1652.8) rotate(-45)">
<path d="M0 0 L3.8 -2.9 H14.6 V2.9 H3.8 Z" fill="#222"/>
<path d="M15.5 -2.9 H18.6 Q19.9 -2.9 19.9 -1.6 V1.6 Q19.9 2.9 18.6 2.9 H15.5 Z" fill="#222"/>
<rect x="2.6" y="-1.1" width="2.2" height="2.2" fill="#fff"/>
</g>
<g fill="none" stroke="#222">
<path d="M3404 1641 H3423" stroke-width="1.8"/>
<path d="M3409.8 1641 L3410.3 1637.8 H3417.7 L3418.2 1641" stroke-width="1.7"/>
<path d="M3406.9 1641 V1655.2 Q3406.9 1656.9 3409.2 1656.9 H3417.8 Q3420.1 1656.9 3420.1 1655.2 V1641" stroke-width="1.7"/>
<path d="M3410 1645.3 V1652.7 M3413.5 1645.3 V1652.7 M3417 1645.3 V1652.7" stroke-width="1.6" stroke-linecap="round"/>
</g>
</svg>
<div class="b" style="left:62px;top:1752px;width:3716px;height:2px;background:#e3e3e3;"></div>
<div class="b" style="left:82px;top:1706px;width:24px;height:24px;box-sizing:border-box;border:1.5px solid #b4b4b4;border-radius:5px;background:#fff;"></div>
<div class="t" style="left:141.62px;top:1706.30px;font-size:23.5px;color:#222;-webkit-text-stroke:0.25px #222;">Disk Read Speed</div>
<div class="t" style="left:762.36px;top:1705.96px;font-size:23.9px;color:#222;-webkit-text-stroke:0.25px #222;">VIWebService</div>
<div class="t" style="left:1176.04px;top:1705.88px;font-size:24px;color:#222;-webkit-text-stroke:0.25px #222;">5</div>
<div class="b" style="left:1590px;top:1700px;width:34px;height:34px"><svg width="34" height="34" viewBox="0 0 34 34"><circle cx="17" cy="17" r="17" fill="#868686"/><circle cx="17" cy="17" r="10.6" fill="none" stroke="#dedede" stroke-width="2.2"/><line x1="8.3" y1="11" x2="25.7" y2="23" stroke="#dedede" stroke-width="2.2"/></svg></div>
<div class="t" style="left:1633.70px;top:1704.43px;font-size:23.7px;color:#222;-webkit-text-stroke:0.25px #222;">Not Enabled</div>
<div class="t" style="left:2002.72px;top:1705.29px;font-size:24.7px;color:#222;-webkit-text-stroke:0.25px #222;">19-04-20 20:59:50</div>
<div class="t" style="left:2892.46px;top:1704.61px;font-size:25.5px;color:#222;-webkit-text-stroke:0.25px #222;">177</div>
<svg class="b" style="left:3270px;top:1695px" width="156" height="26" viewBox="3270 1695 156 26">
<g fill="#222">
<rect x="3274" y="1708" width="2" height="22"/><rect x="3274" y="1728" width="22" height="2"/>
<rect x="3278.2" y="1719.8" width="3.2" height="6" rx="0.6"/><rect x="3284" y="1716" width="3.6" height="10" rx="0.6"/><rect x="3290.2" y="1711.8" width="3.8" height="14" rx="0.6"/>
</g>
<path d="M3317 1722 V1710.3 Q3317 1707.8 3319.5 1707.8 H3336.5 Q3339 1707.8 3339 1710.3 V1722" fill="none" stroke="#222" stroke-width="2.3"/>
<path d="M3316 1722 H3340 V1723.6 Q3340 1725.1 3337 1725.1 Q3335 1725.1 3333.5 1725.4 H3322.5 Q3321 1725.1 3319 1725.1 Q3316 1725.1 3316 1723.6 Z" fill="#222"/>
<path d="M3322 1725.4 H3334 L3335.3 1728 H3320.7 Z" fill="#222"/>
<path d="M3377 1707.8 H3363.8 Q3360.9 1707.8 3360.9 1710.6 V1723.3 Q3360.9 1726.1 3363.8 1726.1 H3375.8 Q3378.6 1726.1 3378.6 1723.3 V1719" fill="none" stroke="#222" stroke-width="1.8"/>
<g transform="translate(3368.9 1722.8) rotate(-45)">
<path d="M0 0 L3.8 -2.9 H14.6 V2.9 H3.8 Z" fill="#222"/>
<path d="M15.5 -2.9 H18.6 Q19.9 -2.9 19.9 -1.6 V1.6 Q19.9 2.9 18.6 2.9 H15.5 Z" fill="#222"/>
<rect x="2.6" y="-1.1" width="2.2" height="2.2" fill="#fff"/>
</g>
<g fill="none" stroke="#222">
<path d="M3404 1711 H3423" stroke-width="1.8"/>
<path d="M3409.8 1711 L3410.3 1707.8 H3417.7 L3418.2 1711" stroke-width="1.7"/>
<path d="M3406.9 1711 V1725.2 Q3406.9 1726.9 3409.2 1726.9 H3417.8 Q3420.1 1726.9 3420.1 1725.2 V1711" stroke-width="1.7"/>
<path d="M3410 1715.3 V1722.7 M3413.5 1715.3 V1722.7 M3417 1715.3 V1722.7" stroke-width="1.6" stroke-linecap="round"/>
</g>
</svg>
<div class="b" style="left:62px;top:1822px;width:3716px;height:2px;background:#e3e3e3;"></div>
<div class="b" style="left:82px;top:1776px;width:24px;height:24px;box-sizing:border-box;border:1.5px solid #b4b4b4;border-radius:5px;background:#fff;"></div>
<div class="t" style="left:141.62px;top:1776.30px;font-size:23.5px;color:#222;-webkit-text-stroke:0.25px #222;">Disk Reads</div>
<div class="t" style="left:762.36px;top:1775.96px;font-size:23.9px;color:#222;-webkit-text-stroke:0.25px #222;">VIWebService</div>
<div class="t" style="left:1176.04px;top:1775.88px;font-size:24px;color:#222;-webkit-text-stroke:0.25px #222;">5</div>
<div class="b" style="left:1590px;top:1770px;width:34px;height:34px"><svg width="34" height="34" viewBox="0 0 34 34"><circle cx="17" cy="17" r="17" fill="#868686"/><circle cx="17" cy="17" r="10.6" fill="none" stroke="#dedede" stroke-width="2.2"/><line x1="8.3" y1="11" x2="25.7" y2="23" stroke="#dedede" stroke-width="2.2"/></svg></div>
<div class="t" style="left:1633.70px;top:1774.43px;font-size:23.7px;color:#222;-webkit-text-stroke:0.25px #222;">Not Enabled</div>
<div class="t" style="left:2002.72px;top:1775.29px;font-size:24.7px;color:#222;-webkit-text-stroke:0.25px #222;">19-04-20 20:59:50</div>
<div class="t" style="left:2893.48px;top:1774.61px;font-size:25.5px;color:#222;-webkit-text-stroke:0.25px #222;">5362</div>
<svg class="b" style="left:3270px;top:1765px" width="156" height="26" viewBox="3270 1765 156 26">
<g fill="#222">
<rect x="3274" y="1778" width="2" height="22"/><rect x="3274" y="1798" width="22" height="2"/>
<rect x="3278.2" y="1789.8" width="3.2" height="6" rx="0.6"/><rect x="3284" y="1786" width="3.6" height="10" rx="0.6"/><rect x="3290.2" y="1781.8" width="3.8" height="14" rx="0.6"/>
</g>
<path d="M3317 1792 V1780.3 Q3317 1777.8 3319.5 1777.8 H3336.5 Q3339 1777.8 3339 1780.3 V1792" fill="none" stroke="#222" stroke-width="2.3"/>
<path d="M3316 1792 H3340 V1793.6 Q3340 1795.1 3337 1795.1 Q3335 1795.1 3333.5 1795.4 H3322.5 Q3321 1795.1 3319 1795.1 Q3316 1795.1 3316 1793.6 Z" fill="#222"/>
<path d="M3322 1795.4 H3334 L3335.3 1798 H3320.7 Z" fill="#222"/>
<path d="M3377 1777.8 H3363.8 Q3360.9 1777.8 3360.9 1780.6 V1793.3 Q3360.9 1796.1 3363.8 1796.1 H3375.8 Q3378.6 1796.1 3378.6 1793.3 V1789" fill="none" stroke="#222" stroke-width="1.8"/>
<g transform="translate(3368.9 1792.8) rotate(-45)">
<path d="M0 0 L3.8 -2.9 H14.6 V2.9 H3.8 Z" fill="#222"/>
<path d="M15.5 -2.9 H18.6 Q19.9 -2.9 19.9 -1.6 V1.6 Q19.9 2.9 18.6 2.9 H15.5 Z" fill="#222"/>
<rect x="2.6" y="-1.1" width="2.2" height="2.2" fill="#fff"/>
</g>
<g fill="none" stroke="#222">
<path d="M3404 1781 H3423" stroke-width="1.8"/>
<path d="M3409.8 1781 L3410.3 1777.8 H3417.7 L3418.2 1781" stroke-width="1.7"/>
<path d="M3406.9 1781 V1795.2 Q3406.9 1796.9 3409.2 1796.9 H3417.8 Q3420.1 1796.9 3420.1 1795.2 V1781" stroke-width="1.7"/>
<path d="M3410 1785.3 V1792.7 M3413.5 1785.3 V1792.7 M3417 1785.3 V1792.7" stroke-width="1.6" stroke-linecap="round"/>
</g>
</svg>
<div class="b" style="left:62px;top:1892px;width:3716px;height:2px;background:#e3e3e3;"></div>
<div class="b" style="left:82px;top:1846px;width:24px;height:24px;box-sizing:border-box;border:1.5px solid #b4b4b4;border-radius:5px;background:#fff;"></div>
<div class="t" style="left:141.62px;top:1846.30px;font-size:23.5px;color:#222;-webkit-text-stroke:0.25px #222;">Disk Write Speed</div>
<div class="t" style="left:762.36px;top:1845.96px;font-size:23.9px;color:#222;-webkit-text-stroke:0.25px #222;">VIWebService</div>
<div class="t" style="left:1176.04px;top:1845.88px;font-size:24px;color:#222;-webkit-text-stroke:0.25px #222;">5</div>
<div class="b" style="left:1590px;top:1840px;width:34px;height:34px"><svg width="34" height="34" viewBox="0 0 34 34"><circle cx="17" cy="17" r="17" fill="#868686"/><circle cx="17" cy="17" r="10.6" fill="none" stroke="#dedede" stroke-width="2.2"/><line x1="8.3" y1="11" x2="25.7" y2="23" stroke="#dedede" stroke-width="2.2"/></svg></div>
<div class="t" style="left:1633.70px;top:1844.43px;font-size:23.7px;color:#222;-webkit-text-stroke:0.25px #222;">Not Enabled</div>
<div class="t" style="left:2002.72px;top:1845.29px;font-size:24.7px;color:#222;-webkit-text-stroke:0.25px #222;">19-04-20 20:59:50</div>
<div class="t" style="left:2892.46px;top:1844.61px;font-size:25.5px;color:#222;-webkit-text-stroke:0.25px #222;">1984</div>
<svg class="b" style="left:3270px;top:1835px" width="156" height="26" viewBox="3270 1835 156 26">
<g fill="#222">
<rect x="3274" y="1848" width="2" height="22"/><rect x="3274" y="1868" width="22" height="2"/>
<rect x="3278.2" y="1859.8" width="3.2" height="6" rx="0.6"/><rect x="3284" y="1856" width="3.6" height="10" rx="0.6"/><rect x="3290.2" y="1851.8" width="3.8" height="14" rx="0.6"/>
</g>
<path d="M3317 1862 V1850.3 Q3317 1847.8 3319.5 1847.8 H3336.5 Q3339 1847.8 3339 1850.3 V1862" fill="none" stroke="#222" stroke-width="2.3"/>
<path d="M3316 1862 H3340 V1863.6 Q3340 1865.1 3337 1865.1 Q3335 1865.1 3333.5 1865.4 H3322.5 Q3321 1865.1 3319 1865.1 Q3316 1865.1 3316 1863.6 Z" fill="#222"/>
<path d="M3322 1865.4 H3334 L3335.3 1868 H3320.7 Z" fill="#222"/>
<path d="M3377 1847.8 H3363.8 Q3360.9 1847.8 3360.9 1850.6 V1863.3 Q3360.9 1866.1 3363.8 1866.1 H3375.8 Q3378.6 1866.1 3378.6 1863.3 V1859" fill="none" stroke="#222" stroke-width="1.8"/>
<g transform="translate(3368.9 1862.8) rotate(-45)">
<path d="M0 0 L3.8 -2.9 H14.6 V2.9 H3.8 Z" fill="#222"/>
<path d="M15.5 -2.9 H18.6 Q19.9 -2.9 19.9 -1.6 V1.6 Q19.9 2.9 18.6 2.9 H15.5 Z" fill="#222"/>
<rect x="2.6" y="-1.1" width="2.2" height="2.2" fill="#fff"/>
</g>
<g fill="none" stroke="#222">
<path d="M3404 1851 H3423" stroke-width="1.8"/>
<path d="M3409.8 1851 L3410.3 1847.8 H3417.7 L3418.2 1851" stroke-width="1.7"/>
<path d="M3406.9 1851 V1865.2 Q3406.9 1866.9 3409.2 1866.9 H3417.8 Q3420.1 1866.9 3420.1 1865.2 V1851" stroke-width="1.7"/>
<path d="M3410 1855.3 V1862.7 M3413.5 1855.3 V1862.7 M3417 1855.3 V1862.7" stroke-width="1.6" stroke-linecap="round"/>
</g>
</svg>
<div class="b" style="left:62px;top:1962px;width:3716px;height:2px;background:#e3e3e3;"></div>
<div class="b" style="left:82px;top:1916px;width:24px;height:24px;box-sizing:border-box;border:1.5px solid #b4b4b4;border-radius:5px;background:#fff;"></div>
<div class="t" style="left:141.62px;top:1916.30px;font-size:23.5px;color:#222;-webkit-text-stroke:0.25px #222;">Disk Writes</div>
<div class="t" style="left:762.36px;top:1915.96px;font-size:23.9px;color:#222;-webkit-text-stroke:0.25px #222;">VIWebService</div>
<div class="t" style="left:1176.04px;top:1915.88px;font-size:24px;color:#222;-webkit-text-stroke:0.25px #222;">5</div>
<div class="b" style="left:1590px;top:1910px;width:34px;height:34px"><svg width="34" height="34" viewBox="0 0 34 34"><circle cx="17" cy="17" r="17" fill="#868686"/><circle cx="17" cy="17" r="10.6" fill="none" stroke="#dedede" stroke-width="2.2"/><line x1="8.3" y1="11" x2="25.7" y2="23" stroke="#dedede" stroke-width="2.2"/></svg></div>
<div class="t" style="left:1633.70px;top:1914.43px;font-size:23.7px;color:#222;-webkit-text-stroke:0.25px #222;">Not Enabled</div>
<div class="t" style="left:2002.72px;top:1915.29px;font-size:24.7px;color:#222;-webkit-text-stroke:0.25px #222;">19-04-20 20:59:50</div>
<div class="t" style="left:2893.48px;top:1914.61px;font-size:25.5px;color:#222;-webkit-text-stroke:0.25px #222;">39178</div>
<svg class="b" style="left:3270px;top:1905px" width="156" height="26" viewBox="3270 1905 156 26">
<g fill="#222">
<rect x="3274" y="1918" width="2" height="22"/><rect x="3274" y="1938" width="22" height="2"/>
<rect x="3278.2" y="1929.8" width="3.2" height="6" rx="0.6"/><rect x="3284" y="1926" width="3.6" height="10" rx="0.6"/><rect x="3290.2" y="1921.8" width="3.8" height="14" rx="0.6"/>
</g>
<path d="M3317 1932 V1920.3 Q3317 1917.8 3319.5 1917.8 H3336.5 Q3339 1917.8 3339 1920.3 V1932" fill="none" stroke="#222" stroke-width="2.3"/>
<path d="M3316 1932 H3340 V1933.6 Q3340 1935.1 3337 1935.1 Q3335 1935.1 3333.5 1935.4 H3322.5 Q3321 1935.1 3319 1935.1 Q3316 1935.1 3316 1933.6 Z" fill="#222"/>
<path d="M3322 1935.4 H3334 L3335.3 1938 H3320.7 Z" fill="#222"/>
<path d="M3377 1917.8 H3363.8 Q3360.9 1917.8 3360.9 1920.6 V1933.3 Q3360.9 1936.1 3363.8 1936.1 H3375.8 Q3378.6 1936.1 3378.6 1933.3 V1929" fill="none" stroke="#222" stroke-width="1.8"/>
<g transform="translate(3368.9 1932.8) rotate(-45)">
<path d="M0 0 L3.8 -2.9 H14.6 V2.9 H3.8 Z" fill="#222"/>
<path d="M15.5 -2.9 H18.6 Q19.9 -2.9 19.9 -1.6 V1.6 Q19.9 2.9 18.6 2.9 H15.5 Z" fill="#222"/>
<rect x="2.6" y="-1.1" width="2.2" height="2.2" fill="#fff"/>
</g>
<g fill="none" stroke="#222">
<path d="M3404 1921 H3423" stroke-width="1.8"/>
<path d="M3409.8 1921 L3410.3 1917.8 H3417.7 L3418.2 1921" stroke-width="1.7"/>
<path d="M3406.9 1921 V1935.2 Q3406.9 1936.9 3409.2 1936.9 H3417.8 Q3420.1 1936.9 3420.1 1935.2 V1921" stroke-width="1.7"/>
<path d="M3410 1925.3 V1932.7 M3413.5 1925.3 V1932.7 M3417 1925.3 V1932.7" stroke-width="1.6" stroke-linecap="round"/>
</g>
</svg>
<div class="b" style="left:62px;top:2032px;width:3716px;height:2px;background:#e3e3e3;"></div>
<div class="b" style="left:82px;top:1986px;width:24px;height:24px;box-sizing:border-box;border:1.5px solid #b4b4b4;border-radius:5px;background:#fff;"></div>
<div class="t" style="left:141.62px;top:1986.30px;font-size:23.5px;color:#222;-webkit-text-stroke:0.25px #222;">Dropped Received Packets</div>
<div class="t" style="left:762.36px;top:1985.96px;font-size:23.9px;color:#222;-webkit-text-stroke:0.25px #222;">VIWebService</div>
<div class="t" style="left:1176.04px;top:1985.88px;font-size:24px;color:#222;-webkit-text-stroke:0.25px #222;">5</div>
<div class="b" style="left:1590px;top:1980px;width:34px;height:34px"><svg width="34" height="34" viewBox="0 0 34 34"><circle cx="17" cy="17" r="17" fill="#868686"/><circle cx="17" cy="17" r="10.6" fill="none" stroke="#dedede" stroke-width="2.2"/><line x1="8.3" y1="11" x2="25.7" y2="23" stroke="#dedede" stroke-width="2.2"/></svg></div>
<div class="t" style="left:1633.70px;top:1984.43px;font-size:23.7px;color:#222;-webkit-text-stroke:0.25px #222;">Not Enabled</div>
<div class="t" style="left:2002.72px;top:1985.29px;font-size:24.7px;color:#222;-webkit-text-stroke:0.25px #222;">19-04-20 20:59:50</div>
<div class="t" style="left:2893.48px;top:1984.61px;font-size:25.5px;color:#222;-webkit-text-stroke:0.25px #222;">0</div>
<svg class="b" style="left:3270px;top:1975px" width="156" height="26" viewBox="3270 1975 156 26">
<g fill="#222">
<rect x="3274" y="1988" width="2" height="22"/><rect x="3274" y="2008" width="22" height="2"/>
<rect x="3278.2" y="1999.8" width="3.2" height="6" rx="0.6"/><rect x="3284" y="1996" width="3.6" height="10" rx="0.6"/><rect x="3290.2" y="1991.8" width="3.8" height="14" rx="0.6"/>
</g>
<path d="M3317 2002 V1990.3 Q3317 1987.8 3319.5 1987.8 H3336.5 Q3339 1987.8 3339 1990.3 V2002" fill="none" stroke="#222" stroke-width="2.3"/>
<path d="M3316 2002 H3340 V2003.6 Q3340 2005.1 3337 2005.1 Q3335 2005.1 3333.5 2005.4 H3322.5 Q3321 2005.1 3319 2005.1 Q3316 2005.1 3316 2003.6 Z" fill="#222"/>
<path d="M3322 2005.4 H3334 L3335.3 2008 H3320.7 Z" fill="#222"/>
<path d="M3377 1987.8 H3363.8 Q3360.9 1987.8 3360.9 1990.6 V2003.3 Q3360.9 2006.1 3363.8 2006.1 H3375.8 Q3378.6 2006.1 3378.6 2003.3 V1999" fill="none" stroke="#222" stroke-width="1.8"/>
<g transform="translate(3368.9 2002.8) rotate(-45)">
<path d="M0 0 L3.8 -2.9 H14.6 V2.9 H3.8 Z" fill="#222"/>
<path d="M15.5 -2.9 H18.6 Q19.9 -2.9 19.9 -1.6 V1.6 Q19.9 2.9 18.6 2.9 H15.5 Z" fill="#222"/>
<rect x="2.6" y="-1.1" width="2.2" height="2.2" fill="#fff"/>
</g>
<g fill="none" stroke="#222">
<path d="M3404 1991 H3423" stroke-width="1.8"/>
<path d="M3409.8 1991 L3410.3 1987.8 H3417.7 L3418.2 1991" stroke-width="1.7"/>
<path d="M3406.9 1991 V2005.2 Q3406.9 2006.9 3409.2 2006.9 H3417.8 Q3420.1 2006.9 3420.1 2005.2 V1991" stroke-width="1.7"/>
<path d="M3410 1995.3 V2002.7 M3413.5 1995.3 V2002.7 M3417 1995.3 V2002.7" stroke-width="1.6" stroke-linecap="round"/>
</g>
</svg>
<div class="b" style="left:62px;top:2102px;width:3716px;height:2px;background:#e3e3e3;"></div>
<div class="b" style="left:82px;top:2056px;width:24px;height:24px;box-sizing:border-box;border:1.5px solid #b4b4b4;border-radius:5px;background:#fff;"></div>
<div class="t" style="left:141.62px;top:2056.30px;font-size:23.5px;color:#222;-webkit-text-stroke:0.25px #222;">Dropped Transmitted Packets</div>
<div class="t" style="left:762.36px;top:2055.96px;font-size:23.9px;color:#222;-webkit-text-stroke:0.25px #222;">VIWebService</div>
<div class="t" style="left:1176.04px;top:2055.88px;font-size:24px;color:#222;-webkit-text-stroke:0.25px #222;">5</div>
<div class="b" style="left:1590px;top:2050px;width:34px;height:34px"><svg width="34" height="34" viewBox="0 0 34 34"><circle cx="17" cy="17" r="17" fill="#868686"/><circle cx="17" cy="17" r="10.6" fill="none" stroke="#dedede" stroke-width="2.2"/><line x1="8.3" y1="11" x2="25.7" y2="23" stroke="#dedede" stroke-width="2.2"/></svg></div>
<div class="t" style="left:1633.70px;top:2054.43px;font-size:23.7px;color:#222;-webkit-text-stroke:0.25px #222;">Not Enabled</div>
<div class="t" style="left:2002.72px;top:2055.29px;font-size:24.7px;color:#222;-webkit-text-stroke:0.25px #222;">19-04-20 20:59:50</div>
<div class="t" style="left:2893.48px;top:2054.61px;font-size:25.5px;color:#222;-webkit-text-stroke:0.25px #222;">0</div>
<svg class="b" style="left:3270px;top:2045px" width="156" height="26" viewBox="3270 2045 156 26">
<g fill="#222">
<rect x="3274" y="2058" width="2" height="22"/><rect x="3274" y="2078" width="22" height="2"/>
<rect x="3278.2" y="2069.8" width="3.2" height="6" rx="0.6"/><rect x="3284" y="2066" width="3.6" height="10" rx="0.6"/><rect x="3290.2" y="2061.8" width="3.8" height="14" rx="0.6"/>
</g>
<path d="M3317 2072 V2060.3 Q3317 2057.8 3319.5 2057.8 H3336.5 Q3339 2057.8 3339 2060.3 V2072" fill="none" stroke="#222" stroke-width="2.3"/>
<path d="M3316 2072 H3340 V2073.6 Q3340 2075.1 3337 2075.1 Q3335 2075.1 3333.5 2075.4 H3322.5 Q3321 2075.1 3319 2075.1 Q3316 2075.1 3316 2073.6 Z" fill="#222"/>
<path d="M3322 2075.4 H3334 L3335.3 2078 H3320.7 Z" fill="#222"/>
<path d="M3377 2057.8 H3363.8 Q3360.9 2057.8 3360.9 2060.6 V2073.3 Q3360.9 2076.1 3363.8 2076.1 H3375.8 Q3378.6 2076.1 3378.6 2073.3 V2069" fill="none" stroke="#222" stroke-width="1.8"/>
<g transform="translate(3368.9 2072.8) rotate(-45)">
<path d="M0 0 L3.8 -2.9 H14.6 V2.9 H3.8 Z" fill="#222"/>
<path d="M15.5 -2.9 H18.6 Q19.9 -2.9 19.9 -1.6 V1.6 Q19.9 2.9 18.6 2.9 H15.5 Z" fill="#222"/>
<rect x="2.6" y="-1.1" width="2.2" height="2.2" fill="#fff"/>
</g>
<g fill="none" stroke="#222">
<path d="M3404 2061 H3423" stroke-width="1.8"/>
<path d="M3409.8 2061 L3410.3 2057.8 H3417.7 L3418.2 2061" stroke-width="1.7"/>
<path d="M3406.9 2061 V2075.2 Q3406.9 2076.9 3409.2 2076.9 H3417.8 Q3420.1 2076.9 3420.1 2075.2 V2061" stroke-width="1.7"/>
<path d="M3410 2065.3 V2072.7 M3413.5 2065.3 V2072.7 M3417 2065.3 V2072.7" stroke-width="1.6" stroke-linecap="round"/>
</g>
</svg>
<div class="b" style="left:62px;top:2172px;width:3716px;height:2px;background:#e3e3e3;"></div>
<div class="b" style="left:82px;top:2126px;width:24px;height:24px;box-sizing:border-box;border:1.5px solid #b4b4b4;border-radius:5px;background:#fff;"></div>
<div class="t" style="left:141.62px;top:2126.30px;font-size:23.5px;color:#222;-webkit-text-stroke:0.25px #222;">Memory Active</div>
<div class="t" style="left:762.36px;top:2125.96px;font-size:23.9px;color:#222;-webkit-text-stroke:0.25px #222;">VIWebService</div>
<div class="t" style="left:1176.04px;top:2125.88px;font-size:24px;color:#222;-webkit-text-stroke:0.25px #222;">5</div>
<div class="b" style="left:1590px;top:2120px;width:34px;height:34px"><svg width="34" height="34" viewBox="0 0 34 34"><circle cx="17" cy="17" r="17" fill="#868686"/><circle cx="17" cy="17" r="10.6" fill="none" stroke="#dedede" stroke-width="2.2"/><line x1="8.3" y1="11" x2="25.7" y2="23" stroke="#dedede" stroke-width="2.2"/></svg></div>
<div class="t" style="left:1633.70px;top:2124.43px;font-size:23.7px;color:#222;-webkit-text-stroke:0.25px #222;">Not Enabled</div>
<div class="t" style="left:2002.72px;top:2125.29px;font-size:24.7px;color:#222;-webkit-text-stroke:0.25px #222;">19-04-20 20:59:50</div>
<div class="t" style="left:2892.46px;top:2124.61px;font-size:25.5px;color:#222;-webkit-text-stroke:0.25px #222;">15550465</div>
<svg class="b" style="left:3270px;top:2115px" width="156" height="26" viewBox="3270 2115 156 26">
<g fill="#222">
<rect x="3274" y="2128" width="2" height="22"/><rect x="3274" y="2148" width="22" height="2"/>
<rect x="3278.2" y="2139.8" width="3.2" height="6" rx="0.6"/><rect x="3284" y="2136" width="3.6" height="10" rx="0.6"/><rect x="3290.2" y="2131.8" width="3.8" height="14" rx="0.6"/>
</g>
<path d="M3317 2142 V2130.3 Q3317 2127.8 3319.5 2127.8 H3336.5 Q3339 2127.8 3339 2130.3 V2142" fill="none" stroke="#222" stroke-width="2.3"/>
<path d="M3316 2142 H3340 V2143.6 Q3340 2145.1 3337 2145.1 Q3335 2145.1 3333.5 2145.4 H3322.5 Q3321 2145.1 3319 2145.1 Q3316 2145.1 3316 2143.6 Z" fill="#222"/>
<path d="M3322 2145.4 H3334 L3335.3 2148 H3320.7 Z" fill="#222"/>
<path d="M3377 2127.8 H3363.8 Q3360.9 2127.8 3360.9 2130.6 V2143.3 Q3360.9 2146.1 3363.8 2146.1 H3375.8 Q3378.6 2146.1 3378.6 2143.3 V2139" fill="none" stroke="#222" stroke-width="1.8"/>
<g transform="translate(3368.9 2142.8) rotate(-45)">
<path d="M0 0 L3.8 -2.9 H14.6 V2.9 H3.8 Z" fill="#222"/>
<path d="M15.5 -2.9 H18.6 Q19.9 -2.9 19.9 -1.6 V1.6 Q19.9 2.9 18.6 2.9 H15.5 Z" fill="#222"/>
<rect x="2.6" y="-1.1" width="2.2" height="2.2" fill="#fff"/>
</g>
<g fill="none" stroke="#222">
<path d="M3404 2131 H3423" stroke-width="1.8"/>
<path d="M3409.8 2131 L3410.3 2127.8 H3417.7 L3418.2 2131" stroke-width="1.7"/>
<path d="M3406.9 2131 V2145.2 Q3406.9 2146.9 3409.2 2146.9 H3417.8 Q3420.1 2146.9 3420.1 2145.2 V2131" stroke-width="1.7"/>
<path d="M3410 2135.3 V2142.7 M3413.5 2135.3 V2142.7 M3417 2135.3 V2142.7" stroke-width="1.6" stroke-linecap="round"/>
</g>
</svg>
<div class="b" style="left:3557px;top:2079px;width:76px;height:63px;background:#262626;"></div>
<div class="b" style="left:3557px;top:2079px;width:76px;height:7px;background:#000;"></div>
<div class="t" style="left:3587.00px;top:2089.60px;font-size:30.0px;color:#3dbf7f;font-weight:bold;">3</div>
<div class="t" style="left:3569.00px;top:2119.98px;font-size:16.56px;color:#8a8a8a;">Alarms</div>
<div class="b" style="left:3701px;top:2080px;width:88px;height:62px;background:#717171;"></div>
<div class="b" style="left:3701px;top:2080px;width:88px;height:8px;background:#878787;"></div>
<svg class="b" style="left:3720px;top:2094px" width="50" height="48" viewBox="0 0 50 48" fill="none" stroke="#ddd" stroke-width="1.6">
<path d="M11 12 V6 Q11 3 14 3 H46 Q49 3 49 6 V20 Q49 23 46 23 H40"/>
<path d="M6 13 H37 Q40 13 40 16 V34 Q40 37 37 37 H21 L14 45 V37 H6 Q3 37 3 34 V16 Q3 13 6 13 Z"/>
<path d="M9 20 H19 M9 25 H29 M9 29 H29" stroke-width="1.8"/>
</svg>
</body></html>
